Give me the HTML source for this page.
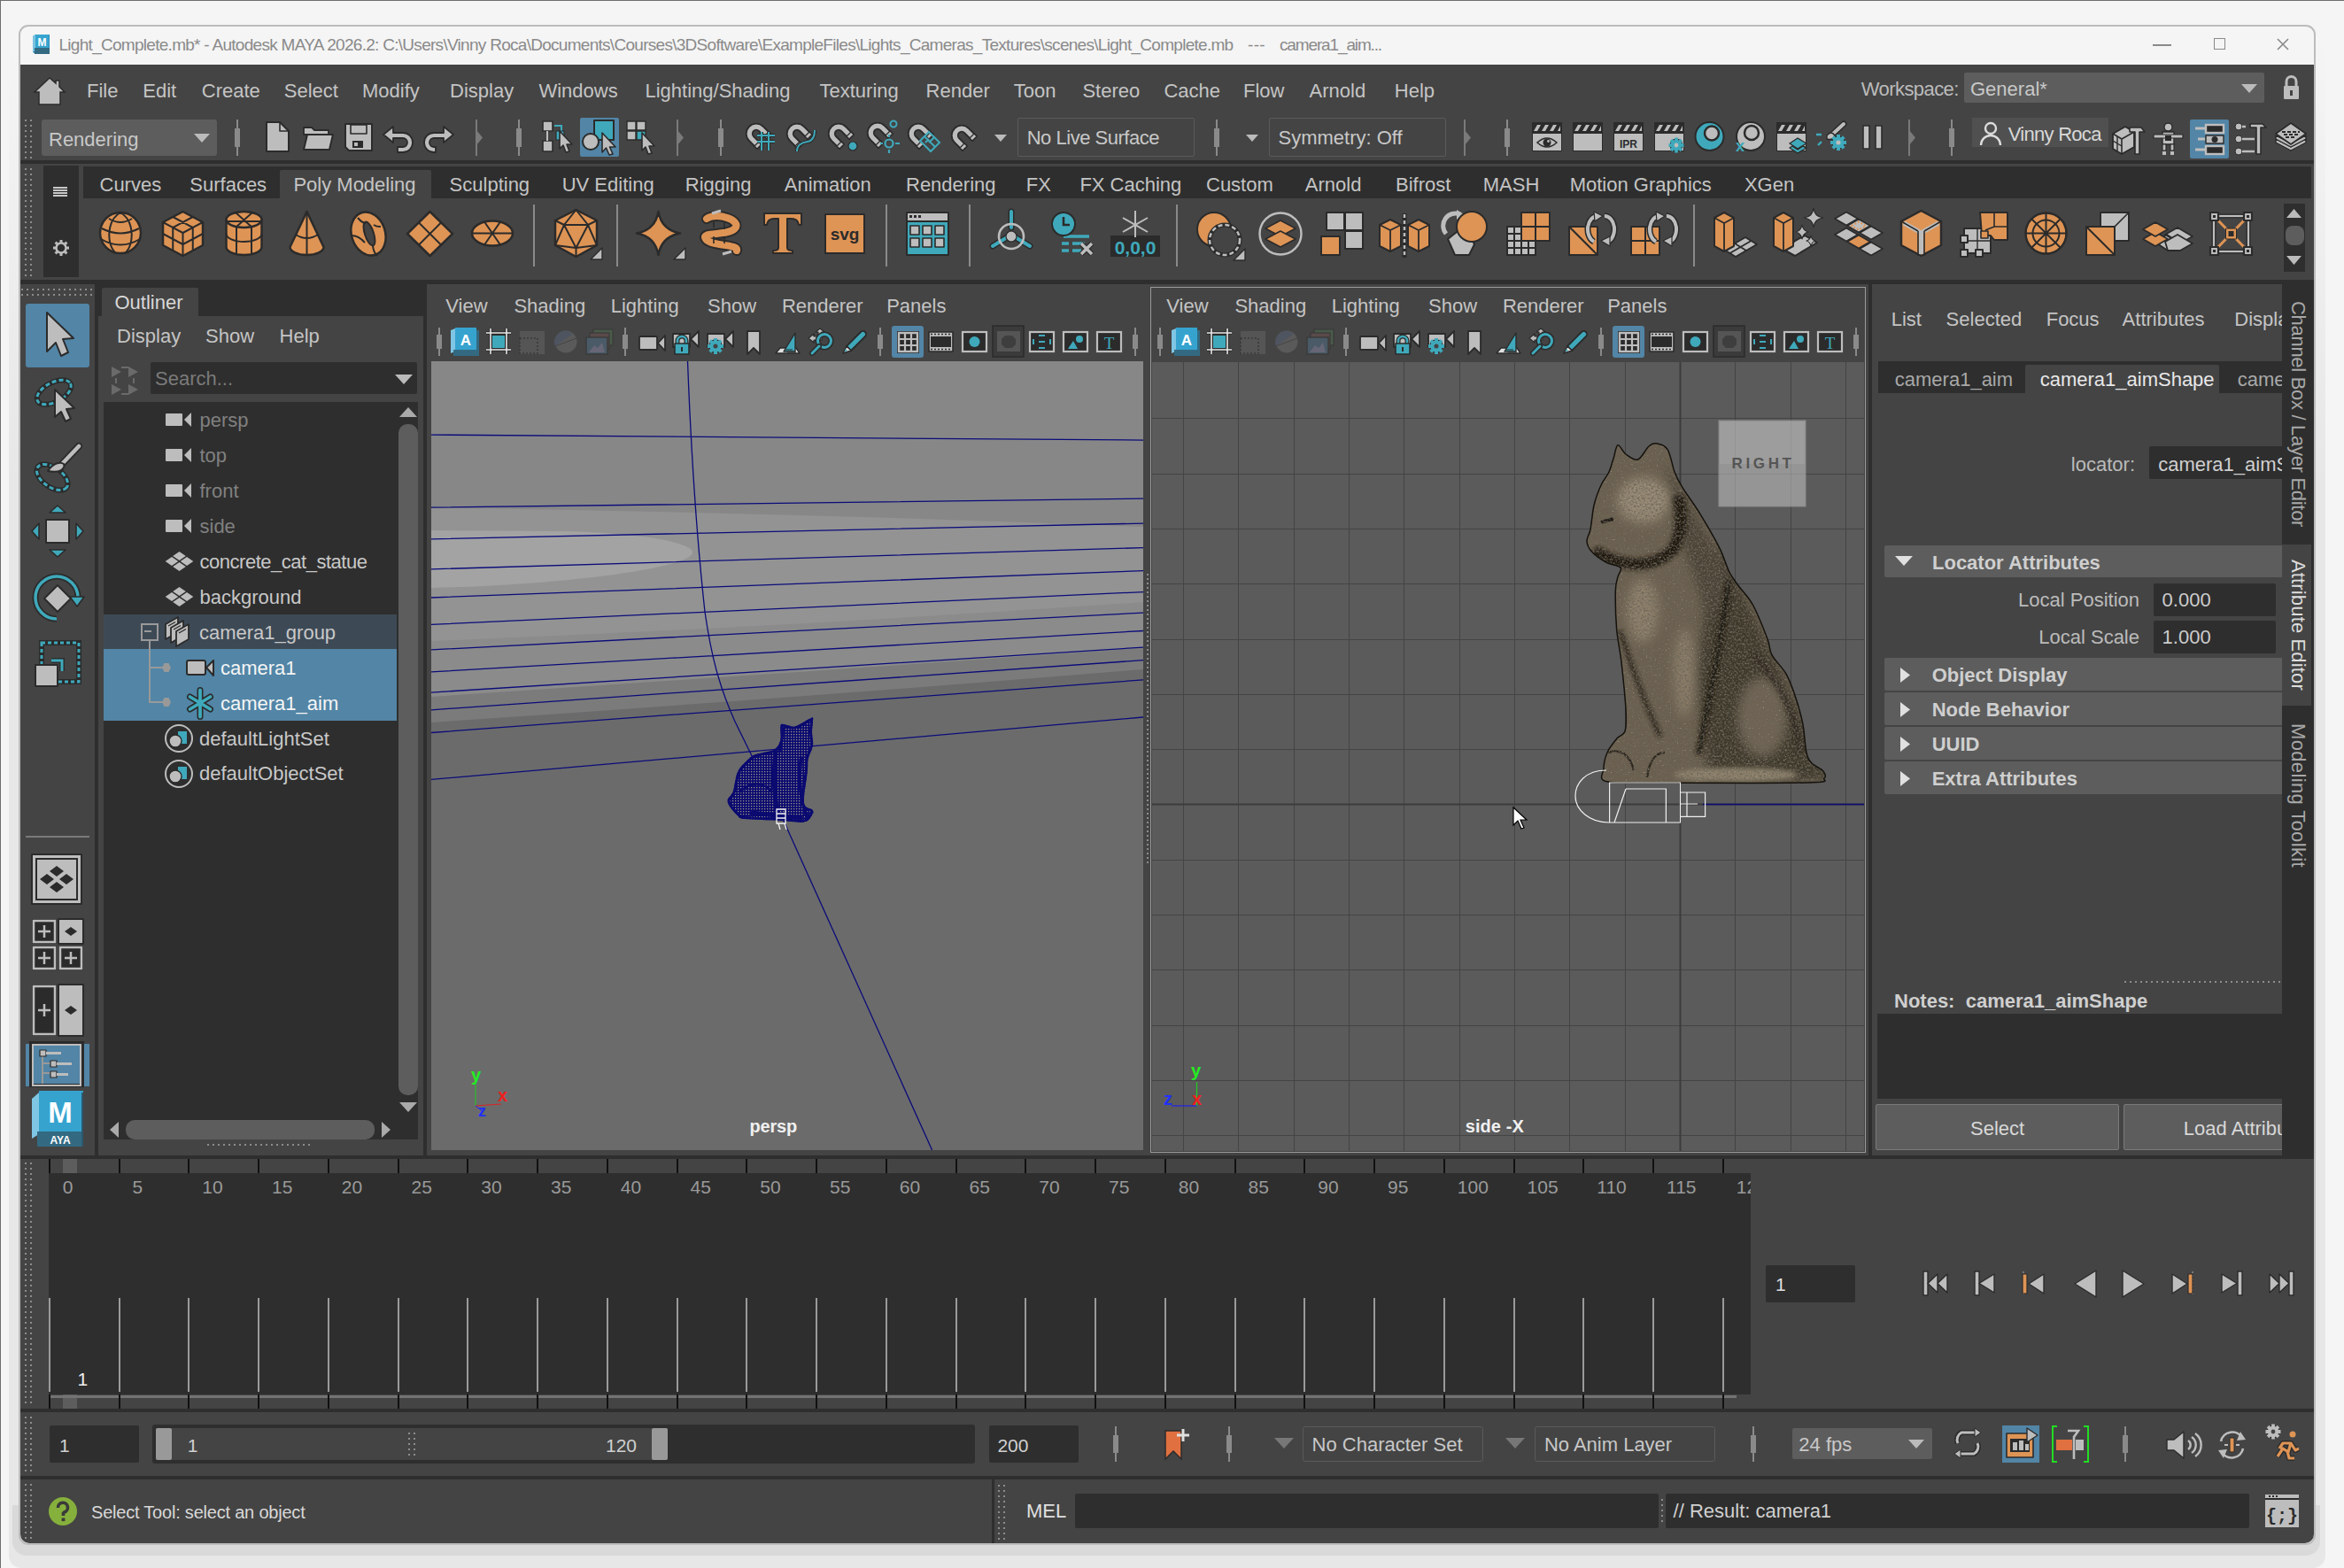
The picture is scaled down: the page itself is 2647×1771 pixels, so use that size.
<!DOCTYPE html><html><head><meta charset="utf-8"><style>
html,body{margin:0;padding:0;}
body{width:2647px;height:1771px;overflow:hidden;position:relative;background:#f5f5f5;font-family:"Liberation Sans",sans-serif;}
.r{position:absolute;}
.t{position:absolute;white-space:pre;}
svg.r{overflow:visible;}
</style></head><body>
<div class="r" style="left:10px;top:40px;width:2616px;height:1731px;background:#e7e7e7;border-radius:14px;background:linear-gradient(to bottom,#f5f5f5 0px,#e7e7e7 500px);"></div>
<div class="r" style="left:14px;top:1700px;width:2606px;height:57px;background:#d9d9d9;border-radius:0 0 16px 16px;"></div>
<div class="r" style="left:21px;top:28px;width:2590px;height:1713px;border:2px solid #bcbcbc;border-radius:11px;background:#f5f5f5;"></div>
<div class="r" style="left:23px;top:73px;width:2590px;height:1670px;background:#444444;border-radius:0 0 10px 10px;"></div>
<div class="r" style="left:0px;top:0px;width:2647px;height:1px;background:#6e6e6e;"></div>
<div class="r" style="left:0px;top:0px;width:1px;height:1771px;background:#6e6e6e;"></div>
<svg class="r" style="left:35px;top:38px;" width="22" height="24" viewBox="0 0 22 24"><path d="M2 3 L5 1 L21 1 L21 22 L3 22 L2 20 Z" fill="#2f90c0"/>
<path d="M2 3 L5 1 L5 20 L2 20 Z" fill="#78c4e0"/><rect x="5" y="1" width="15" height="16" fill="#38a5cf"/>
<rect x="4" y="16" width="17" height="7" fill="#336a82"/>
<text x="12.5" y="14" font-size="12" font-weight="bold" fill="#fff" text-anchor="middle" font-family="Liberation Sans">M</text></svg>
<div class="t" style="left:66.50px;top:40.91px;font-size:19px;line-height:19px;color:#8a8a8a;letter-spacing:-0.714px;">Light_Complete.mb* - Autodesk MAYA 2026.2: C:\Users\Vinny Roca\Documents\Courses\3DSoftware\ExampleFiles\Lights_Cameras_Textures\scenes\Light_Complete.mb</div>
<div class="t" style="left:1409.00px;top:40.91px;font-size:19px;line-height:19px;color:#8a8a8a;letter-spacing:0.339px;">---</div>
<div class="t" style="left:1445.00px;top:40.91px;font-size:19px;line-height:19px;color:#8a8a8a;letter-spacing:-1.139px;">camera1_aim...</div>
<div class="r" style="left:2431px;top:50px;width:21px;height:2px;background:#8a8a8a;"></div>
<div class="r" style="left:2500px;top:43px;width:11px;height:11px;border:1.5px solid #8a8a8a;"></div>
<svg class="r" style="left:2571px;top:43px;" width="14" height="14" viewBox="0 0 14 14"><path d="M1 1 L13 13 M13 1 L1 13" stroke="#8a8a8a" stroke-width="1.6"/></svg>
<svg class="r" style="left:38px;top:87px;" width="36" height="32" viewBox="0 0 36 32"><path d="M18 1 L1 17 L6 17 L6 31 L30 31 L30 17 L35 17 L29 11 L29 4 L25 4 L25 7 Z" fill="#bdbdbd" stroke="#2b2b2b" stroke-width="1.5"/></svg>
<div class="t" style="left:98.00px;top:92.37px;font-size:22px;line-height:22px;color:#c4c4c4;">File</div>
<div class="t" style="left:161.30px;top:92.37px;font-size:22px;line-height:22px;color:#c4c4c4;">Edit</div>
<div class="t" style="left:227.80px;top:92.37px;font-size:22px;line-height:22px;color:#c4c4c4;">Create</div>
<div class="t" style="left:320.80px;top:92.37px;font-size:22px;line-height:22px;color:#c4c4c4;">Select</div>
<div class="t" style="left:409.00px;top:92.37px;font-size:22px;line-height:22px;color:#c4c4c4;">Modify</div>
<div class="t" style="left:508.00px;top:92.37px;font-size:22px;line-height:22px;color:#c4c4c4;">Display</div>
<div class="t" style="left:608.40px;top:92.37px;font-size:22px;line-height:22px;color:#c4c4c4;">Windows</div>
<div class="t" style="left:728.50px;top:92.37px;font-size:22px;line-height:22px;color:#c4c4c4;">Lighting/Shading</div>
<div class="t" style="left:925.50px;top:92.37px;font-size:22px;line-height:22px;color:#c4c4c4;">Texturing</div>
<div class="t" style="left:1045.60px;top:92.37px;font-size:22px;line-height:22px;color:#c4c4c4;">Render</div>
<div class="t" style="left:1144.80px;top:92.37px;font-size:22px;line-height:22px;color:#c4c4c4;">Toon</div>
<div class="t" style="left:1222.40px;top:92.37px;font-size:22px;line-height:22px;color:#c4c4c4;">Stereo</div>
<div class="t" style="left:1314.40px;top:92.37px;font-size:22px;line-height:22px;color:#c4c4c4;">Cache</div>
<div class="t" style="left:1404.00px;top:92.37px;font-size:22px;line-height:22px;color:#c4c4c4;">Flow</div>
<div class="t" style="left:1478.60px;top:92.37px;font-size:22px;line-height:22px;color:#c4c4c4;">Arnold</div>
<div class="t" style="left:1574.80px;top:92.37px;font-size:22px;line-height:22px;color:#c4c4c4;">Help</div>
<div class="t" style="left:2101.80px;top:89.87px;font-size:22px;line-height:22px;color:#bbbbbb;letter-spacing:-0.575px;">Workspace:</div>
<div class="r" style="left:2218px;top:82px;width:339px;height:34px;background:#5d5d5d;border-radius:2px;"></div>
<div class="t" style="left:2225.00px;top:89.87px;font-size:22px;line-height:22px;color:#c8c8c8;">General*</div>
<svg class="r" style="left:2531px;top:95px;" width="18" height="10" viewBox="0 0 18 10"><path d="M0 0 L18 0 L9.0 10 Z" fill="#bbbbbb"/></svg>
<svg class="r" style="left:2577px;top:85px;" width="21" height="28" viewBox="0 0 21 28"><path d="M5 12 L5 7 A5.5 5.5 0 0 1 16 7 L16 12" fill="none" stroke="#bdbdbd" stroke-width="3"/><rect x="2" y="12" width="17" height="15" rx="1" fill="#bdbdbd"/><rect x="9" y="17" width="3" height="6" fill="#444"/></svg>
<!--STATUS-->
<svg class="r" style="left:28px;top:135px;" width="8" height="43" viewBox="0 0 8 43"><g fill="#8c8c8c"><rect x="0" y="0" width="2" height="2"/><rect x="6" y="0" width="2" height="2"/><rect x="0" y="6" width="2" height="2"/><rect x="6" y="6" width="2" height="2"/><rect x="0" y="12" width="2" height="2"/><rect x="6" y="12" width="2" height="2"/><rect x="0" y="18" width="2" height="2"/><rect x="6" y="18" width="2" height="2"/><rect x="0" y="24" width="2" height="2"/><rect x="6" y="24" width="2" height="2"/><rect x="0" y="30" width="2" height="2"/><rect x="6" y="30" width="2" height="2"/><rect x="0" y="36" width="2" height="2"/><rect x="6" y="36" width="2" height="2"/><rect x="0" y="42" width="2" height="2"/><rect x="6" y="42" width="2" height="2"/></g></svg>
<div class="r" style="left:47px;top:135px;width:198px;height:41px;background:#5d5d5d;border-radius:3px;"></div>
<div class="t" style="left:55.00px;top:146.87px;font-size:22px;line-height:22px;color:#c8c8c8;">Rendering</div>
<svg class="r" style="left:219px;top:151px;" width="18" height="10" viewBox="0 0 18 10"><path d="M0 0 L18 0 L9.0 10 Z" fill="#bbbbbb"/></svg>
<div class="r" style="left:267px;top:135px;width:2px;height:41px;background:#8a8a8a;"></div>
<div class="r" style="left:265px;top:145.25px;width:6px;height:20.5px;background:#8a8a8a;"></div>
<div class="r" style="left:655px;top:133px;width:44px;height:44px;background:#5285a6;border-radius:2px;"></div>
<div class="r" style="left:2473px;top:135px;width:44px;height:44px;background:#5285a6;border-radius:2px;"></div>
<svg class="r" style="left:300px;top:137px;" width="28" height="36" viewBox="0 0 28 36"><path d="M1 1 H16 L26 11 V34 H1 Z" fill="#bdbdbd" stroke="#2b2b2b" stroke-width="2" stroke-linejoin="round"/><path d="M16 1 V11 H26" fill="none" stroke="#2b2b2b" stroke-width="1.6" stroke-linejoin="round"/></svg>
<svg class="r" style="left:341px;top:140px;" width="37" height="31" viewBox="0 0 37 31"><path d="M2 4 H11 L14 7 H30 V12 H2 Z" fill="#bdbdbd" stroke="#2b2b2b" stroke-width="1.8" stroke-linejoin="round"/><path d="M6 12 H35 L31 29 H2 Z" fill="#bdbdbd" stroke="#2b2b2b" stroke-width="2" stroke-linejoin="round"/></svg>
<svg class="r" style="left:389px;top:139px;" width="33" height="33" viewBox="0 0 33 33"><path d="M1 1 H31 V31 H5 L1 27 Z" fill="#bdbdbd" stroke="#2b2b2b" stroke-width="2" stroke-linejoin="round"/><rect x="7" y="2" width="18" height="10" fill="#bdbdbd" stroke="#2b2b2b" stroke-width="1.6" stroke-linejoin="round"/><rect x="9" y="20" width="12" height="8" fill="#2b2b2b"/><rect x="11" y="22" width="4" height="4" fill="#bdbdbd"/></svg>
<svg class="r" style="left:431px;top:141px;" width="37" height="33" viewBox="0 0 37 33"><path d="M13 2 L2 11 L13 20 L13 15 H24 A5 5 0 0 1 24 25 H18 V31 H24 A11 11 0 0 0 24 9 H13 Z" fill="#bdbdbd" stroke="#2b2b2b" stroke-width="1.8" stroke-linejoin="round"/></svg>
<svg class="r" style="left:478px;top:141px;" width="37" height="33" viewBox="0 0 37 33"><path d="M23 2 L34 11 L23 20 L23 15 H12 A5 5 0 0 0 12 25 H14 V31 H12 A11 11 0 0 1 12 9 H23 Z" fill="#bdbdbd" stroke="#2b2b2b" stroke-width="1.8" stroke-linejoin="round"/></svg>
<svg class="r" style="left:612px;top:136px;" width="36" height="38" viewBox="0 0 36 38"><rect x="1" y="1" width="11" height="11" fill="#bdbdbd" stroke="#2b2b2b" stroke-width="1.6" stroke-linejoin="round"/><rect x="1" y="23" width="11" height="12" fill="#bdbdbd" stroke="#2b2b2b" stroke-width="1.6" stroke-linejoin="round"/><path d="M6 12 V23" stroke="#bdbdbd" stroke-width="2"/><path d="M14 6 H22 V12" fill="none" stroke="#3fa9bb" stroke-width="2"/><rect x="16" y="12" width="9" height="10" fill="#3fa9bb" stroke="#2b2b2b" stroke-width="1.2" stroke-linejoin="round"/><path d="M20 12 L20 32 L24 28 L27 36 L31 35 L28 27 L34 27 Z" fill="#bdbdbd" stroke="#2b2b2b" stroke-width="1.6" stroke-linejoin="round"/></svg>
<svg class="r" style="left:656px;top:134px;" width="42" height="43" viewBox="0 0 42 43"><rect x="15" y="2" width="22" height="22" fill="#3fa9bb" stroke="#2b2b2b" stroke-width="2" stroke-linejoin="round"/><circle cx="11" cy="26" r="9" fill="#bdbdbd" stroke="#2b2b2b" stroke-width="2" stroke-linejoin="round"/><path d="M24 16 L24 38 L28.5 33 L32 41 L36 40 L32.5 32 L39 32 Z" fill="#bdbdbd" stroke="#2b2b2b" stroke-width="1.6" stroke-linejoin="round"/></svg>
<svg class="r" style="left:707px;top:136px;" width="34" height="38" viewBox="0 0 34 38"><rect x="1" y="1" width="10" height="10" fill="#bdbdbd" stroke="#2b2b2b" stroke-width="1.4" stroke-linejoin="round"/><rect x="12" y="1" width="10" height="10" fill="#bdbdbd" stroke="#2b2b2b" stroke-width="1.4" stroke-linejoin="round"/><rect x="1" y="12" width="10" height="10" fill="#bdbdbd" stroke="#2b2b2b" stroke-width="1.4" stroke-linejoin="round"/><rect x="12" y="12" width="10" height="10" fill="#3fa9bb" stroke="#2b2b2b" stroke-width="1.4" stroke-linejoin="round"/><path d="M18 14 L18 34 L22 30 L25 38 L29 37 L26 29 L32 29 Z" fill="#bdbdbd" stroke="#2b2b2b" stroke-width="1.6" stroke-linejoin="round"/></svg>
<svg class="r" style="left:842px;top:137px;" width="36" height="37" viewBox="0 0 36 37"><path d="M4 22 A11 11 0 0 1 20 6 L29 15 L24 20 L15 11 A4 4 0 0 0 9 17 L18 26 L13 31 Z" fill="#bdbdbd" stroke="#2b2b2b" stroke-width="1.8" stroke-linejoin="round"/><path d="M24 20 L29 15 L26 12 L21 17 Z M13 31 L18 26 L15 23 L10 28 Z" fill="#bdbdbd" stroke="#2b2b2b" stroke-width="1.2" stroke-linejoin="round"/><path d="M13 16 H33 M13 23 H33 M18 12 V33 M26 12 V33" stroke="#2b2b2b" stroke-width="4"/><path d="M13 16 H33 M13 23 H33 M18 12 V33 M26 12 V33" stroke="#3fa9bb" stroke-width="2"/></svg>
<svg class="r" style="left:888px;top:137px;" width="36" height="37" viewBox="0 0 36 37"><path d="M4 22 A11 11 0 0 1 20 6 L29 15 L24 20 L15 11 A4 4 0 0 0 9 17 L18 26 L13 31 Z" fill="#bdbdbd" stroke="#2b2b2b" stroke-width="1.8" stroke-linejoin="round"/><path d="M24 20 L29 15 L26 12 L21 17 Z M13 31 L18 26 L15 23 L10 28 Z" fill="#bdbdbd" stroke="#2b2b2b" stroke-width="1.2" stroke-linejoin="round"/><path d="M12 34 C12 26 18 24 24 23 C30 22 32 16 32 10" fill="none" stroke="#2b2b2b" stroke-width="4"/><path d="M12 34 C12 26 18 24 24 23 C30 22 32 16 32 10" fill="none" stroke="#3fa9bb" stroke-width="2"/></svg>
<svg class="r" style="left:935px;top:137px;" width="36" height="37" viewBox="0 0 36 37"><path d="M4 22 A11 11 0 0 1 20 6 L29 15 L24 20 L15 11 A4 4 0 0 0 9 17 L18 26 L13 31 Z" fill="#bdbdbd" stroke="#2b2b2b" stroke-width="1.8" stroke-linejoin="round"/><path d="M24 20 L29 15 L26 12 L21 17 Z M13 31 L18 26 L15 23 L10 28 Z" fill="#bdbdbd" stroke="#2b2b2b" stroke-width="1.2" stroke-linejoin="round"/><circle cx="28" cy="28" r="5" fill="#3fa9bb" stroke="#2b2b2b" stroke-width="1.2" stroke-linejoin="round"/></svg>
<svg class="r" style="left:979px;top:136px;" width="38" height="38" viewBox="0 0 38 38"><path d="M4 22 A11 11 0 0 1 20 6 L29 15 L24 20 L15 11 A4 4 0 0 0 9 17 L18 26 L13 31 Z" fill="#bdbdbd" stroke="#2b2b2b" stroke-width="1.8" stroke-linejoin="round"/><path d="M24 20 L29 15 L26 12 L21 17 Z M13 31 L18 26 L15 23 L10 28 Z" fill="#bdbdbd" stroke="#2b2b2b" stroke-width="1.2" stroke-linejoin="round"/><circle cx="30" cy="4" r="3.5" fill="none" stroke="#3fa9bb" stroke-width="2"/><circle cx="25" cy="26" r="4.5" fill="none" stroke="#3fa9bb" stroke-width="2.2"/><path d="M25 16 V19 M25 33 V37 M15 26 H18 M32 26 H37" stroke="#3fa9bb" stroke-width="2.2"/></svg>
<svg class="r" style="left:1025px;top:137px;" width="38" height="37" viewBox="0 0 38 37"><path d="M4 22 A11 11 0 0 1 20 6 L29 15 L24 20 L15 11 A4 4 0 0 0 9 17 L18 26 L13 31 Z" fill="#bdbdbd" stroke="#2b2b2b" stroke-width="1.8" stroke-linejoin="round"/><path d="M24 20 L29 15 L26 12 L21 17 Z M13 31 L18 26 L15 23 L10 28 Z" fill="#bdbdbd" stroke="#2b2b2b" stroke-width="1.2" stroke-linejoin="round"/><path d="M14 22 L24 12 L36 24 L26 34 Z" fill="none" stroke="#3fa9bb" stroke-width="2"/><path d="M19 17 L31 29 M24 24 L30 18 M20 24 L24 20" stroke="#3fa9bb" stroke-width="2"/></svg>
<svg class="r" style="left:1074px;top:139px;" width="36" height="37" viewBox="0 0 36 37"><path d="M4 22 A11 11 0 0 1 20 6 L29 15 L24 20 L15 11 A4 4 0 0 0 9 17 L18 26 L13 31 Z" fill="#bdbdbd" stroke="#2b2b2b" stroke-width="1.8" stroke-linejoin="round"/><path d="M24 20 L29 15 L26 12 L21 17 Z M13 31 L18 26 L15 23 L10 28 Z" fill="#bdbdbd" stroke="#2b2b2b" stroke-width="1.2" stroke-linejoin="round"/></svg>
<svg class="r" style="left:1729px;top:137px;" width="36" height="35" viewBox="0 0 36 35"><rect x="1" y="1" width="34" height="33" fill="#2b2b2b"/><rect x="2" y="14" width="32" height="19" fill="#bdbdbd"/><path d="M3 11 L7 4 H11 L7 11 Z M12 11 L16 4 H20 L16 11 Z M21 11 L25 4 H29 L25 11 Z M30 11 L33 5 V11 Z" fill="#bdbdbd"/><path d="M7 24 Q18 14 29 24 Q18 34 7 24 Z" fill="none" stroke="#2b2b2b" stroke-width="1.6"/><circle cx="18" cy="24" r="4.5" fill="#2b2b2b"/><circle cx="19.5" cy="22.5" r="1.4" fill="#bdbdbd"/></svg>
<svg class="r" style="left:1775px;top:137px;" width="36" height="35" viewBox="0 0 36 35"><rect x="1" y="1" width="34" height="33" fill="#2b2b2b"/><rect x="2" y="14" width="32" height="19" fill="#bdbdbd"/><path d="M3 11 L7 4 H11 L7 11 Z M12 11 L16 4 H20 L16 11 Z M21 11 L25 4 H29 L25 11 Z M30 11 L33 5 V11 Z" fill="#bdbdbd"/></svg>
<svg class="r" style="left:1821px;top:137px;" width="36" height="35" viewBox="0 0 36 35"><rect x="1" y="1" width="34" height="33" fill="#2b2b2b"/><rect x="2" y="14" width="32" height="19" fill="#bdbdbd"/><path d="M3 11 L7 4 H11 L7 11 Z M12 11 L16 4 H20 L16 11 Z M21 11 L25 4 H29 L25 11 Z M30 11 L33 5 V11 Z" fill="#bdbdbd"/><text x="18" y="30" font-family="Liberation Sans" font-weight="bold" font-size="12" fill="#2b2b2b" text-anchor="middle">IPR</text></svg>
<svg class="r" style="left:1867px;top:137px;" width="37" height="36" viewBox="0 0 37 36"><rect x="1" y="1" width="34" height="33" fill="#2b2b2b"/><rect x="2" y="14" width="32" height="19" fill="#bdbdbd"/><path d="M3 11 L7 4 H11 L7 11 Z M12 11 L16 4 H20 L16 11 Z M21 11 L25 4 H29 L25 11 Z M30 11 L33 5 V11 Z" fill="#bdbdbd"/><circle cx="26" cy="27" r="6.800000000000001" fill="#3fa9bb" stroke="#2b2b2b" stroke-width="1.2" stroke-linejoin="round"/><path d="M17.5 27 H34.5 M26 18.5 V35.5 M20.05 21.05 L31.95 32.95 M20.05 32.95 L31.95 21.05" stroke="#3fa9bb" stroke-width="3.8"/><circle cx="26" cy="27" r="4.675000000000001" fill="#3fa9bb"/><circle cx="26" cy="27" r="2.3800000000000003" fill="#bdbdbd"/></svg>
<svg class="r" style="left:1913px;top:137px;" width="36" height="35" viewBox="0 0 36 35"><circle cx="17.5" cy="17" r="16" fill="#3fa9bb" stroke="#2b2b2b" stroke-width="2" stroke-linejoin="round"/><circle cx="20" cy="13.5" r="8" fill="#bdbdbd" stroke="#2b2b2b" stroke-width="2.5" stroke-linejoin="round"/></svg>
<svg class="r" style="left:1957px;top:137px;" width="38" height="36" viewBox="0 0 38 36"><circle cx="20" cy="17" r="16" fill="#bdbdbd" stroke="#2b2b2b" stroke-width="2" stroke-linejoin="round"/><circle cx="21" cy="13" r="8" fill="#bdbdbd" stroke="#2b2b2b" stroke-width="2.5" stroke-linejoin="round"/><text x="8" y="34" font-family="Liberation Sans" font-weight="bold" font-size="18" fill="#3fa9bb" text-anchor="middle">x</text></svg>
<svg class="r" style="left:2005px;top:137px;" width="37" height="37" viewBox="0 0 37 37"><rect x="1" y="1" width="34" height="33" fill="#2b2b2b"/><rect x="2" y="14" width="32" height="19" fill="#bdbdbd"/><path d="M3 11 L7 4 H11 L7 11 Z M12 11 L16 4 H20 L16 11 Z M21 11 L25 4 H29 L25 11 Z M30 11 L33 5 V11 Z" fill="#bdbdbd"/><path d="M16 25 L25 19 L35 25 L25 31 Z" fill="#3fa9bb" stroke="#2b2b2b" stroke-width="1.4" stroke-linejoin="round"/><path d="M16 30 L19 28 L25 32 L31 28 L35 30 L25 36 Z" fill="#3fa9bb" stroke="#2b2b2b" stroke-width="1.4" stroke-linejoin="round"/></svg>
<svg class="r" style="left:2050px;top:137px;" width="37" height="36" viewBox="0 0 37 36"><path d="M20 14 L32 3" stroke="#2b2b2b" stroke-width="7" stroke-linecap="round"/><path d="M20 14 L32 3" stroke="#bdbdbd" stroke-width="4" stroke-linecap="round"/><path d="M13 16 Q18 10 22 16 Q20 22 13 20 Z" fill="#bdbdbd" stroke="#2b2b2b" stroke-width="1.4" stroke-linejoin="round"/><path d="M1 15 H7 M3 27 L7 23" stroke="#3fa9bb" stroke-width="2.4"/><circle cx="26" cy="24" r="7.2" fill="#3fa9bb" stroke="#2b2b2b" stroke-width="1.2" stroke-linejoin="round"/><path d="M17 24 H35 M26 15 V33 M19.7 17.7 L32.3 30.3 M19.7 30.3 L32.3 17.7" stroke="#3fa9bb" stroke-width="4.0"/><circle cx="26" cy="24" r="4.95" fill="#3fa9bb"/><circle cx="26" cy="24" r="2.5200000000000005" fill="#bdbdbd"/></svg>
<svg class="r" style="left:2103px;top:141px;" width="24" height="28" viewBox="0 0 24 28"><rect x="1" y="1" width="7" height="26" fill="#bdbdbd" stroke="#2b2b2b" stroke-width="1.6" stroke-linejoin="round"/><rect x="15" y="1" width="7" height="26" fill="#bdbdbd" stroke="#2b2b2b" stroke-width="1.6" stroke-linejoin="round"/></svg>
<svg class="r" style="left:2235px;top:137px;" width="25" height="26" viewBox="0 0 25 26"><circle cx="12.5" cy="7" r="5.5" fill="none" stroke="#e0e0e0" stroke-width="2.2"/><path d="M1.5 25 A11 11 0 0 1 23.5 25" fill="none" stroke="#e0e0e0" stroke-width="2.2"/></svg>
<svg class="r" style="left:2384px;top:138px;" width="39" height="38" viewBox="0 0 39 38"><path d="M2 13 L16 5 L26 11 L26 28 L12 36 L2 30 Z" fill="#bdbdbd" stroke="#2b2b2b" stroke-width="1.8" stroke-linejoin="round"/><path d="M2 13 L12 19 L26 11 M12 19 V36" fill="none" stroke="#2b2b2b" stroke-width="1.6" stroke-linejoin="round"/><path d="M2 21 L12 27 M7 16 V33" stroke="#2b2b2b" stroke-width="1.4"/><path d="M21 6 H34 L38 11 H32 V36 H27 V11 H21 Z" fill="#bdbdbd" stroke="#2b2b2b" stroke-width="1.6" stroke-linejoin="round"/></svg>
<svg class="r" style="left:2431px;top:138px;" width="36" height="38" viewBox="0 0 36 38"><circle cx="17.5" cy="5.5" r="4.5" fill="#bdbdbd" stroke="#2b2b2b" stroke-width="1.4" stroke-linejoin="round"/><rect x="11" y="11" width="13" height="14" fill="#bdbdbd" stroke="#2b2b2b" stroke-width="1.4" stroke-linejoin="round"/><rect x="1" y="14" width="33" height="4" fill="#bdbdbd" stroke="#2b2b2b" stroke-width="1.2" stroke-linejoin="round"/><rect x="14" y="15" width="7" height="6" fill="#2b2b2b"/><rect x="11" y="25" width="4" height="7" fill="#bdbdbd" stroke="#2b2b2b" stroke-width="1.2" stroke-linejoin="round"/><rect x="20" y="25" width="4" height="7" fill="#bdbdbd" stroke="#2b2b2b" stroke-width="1.2" stroke-linejoin="round"/><rect x="11" y="33" width="4" height="4" fill="#bdbdbd"/><rect x="20" y="33" width="4" height="4" fill="#bdbdbd"/></svg>
<svg class="r" style="left:2475px;top:138px;" width="40" height="39" viewBox="0 0 40 39"><path d="M4 7 H15 M7 19 H15 M4 31 H15" stroke="#bdbdbd" stroke-width="3"/><rect x="16" y="3" width="20" height="9" fill="#2b2b2b" stroke="#bdbdbd" stroke-width="2.4"/><rect x="16" y="15" width="20" height="9" fill="#bdbdbd" stroke="#2b2b2b" stroke-width="1.4" stroke-linejoin="round"/><circle cx="26" cy="19.5" r="3.5" fill="#2b2b2b"/><rect x="16" y="27" width="20" height="9" fill="#2b2b2b" stroke="#bdbdbd" stroke-width="2.4"/></svg>
<svg class="r" style="left:2523px;top:138px;" width="37" height="38" viewBox="0 0 37 38"><circle cx="5" cy="5" r="4" fill="#bdbdbd" stroke="#2b2b2b" stroke-width="1" stroke-linejoin="round"/><circle cx="5" cy="19" r="4" fill="#bdbdbd" stroke="#2b2b2b" stroke-width="1" stroke-linejoin="round"/><circle cx="5" cy="33" r="4" fill="#bdbdbd" stroke="#2b2b2b" stroke-width="1" stroke-linejoin="round"/><path d="M9 5 H13 M9 19 H23 M9 33 H23" stroke="#bdbdbd" stroke-width="2.4"/><path d="M18 2 H32 L36 6 H30 V36 H25 V6 H18 Z" fill="#bdbdbd" stroke="#2b2b2b" stroke-width="1.6" stroke-linejoin="round"/></svg>
<svg class="r" style="left:2569px;top:138px;" width="36" height="38" viewBox="0 0 36 38"><path d="M18 28 L1 19 V23 L18 32 L35 23 V19 Z" fill="#bdbdbd" stroke="#2b2b2b" stroke-width="1.4" stroke-linejoin="round"/><path d="M18 24 L1 15 V19 L18 28 L35 19 V15 Z" fill="#bdbdbd" stroke="#2b2b2b" stroke-width="1.4" stroke-linejoin="round"/><path d="M18 1 L35 13 L18 25 L1 13 Z" fill="#bdbdbd" stroke="#2b2b2b" stroke-width="1.6" stroke-linejoin="round"/><path d="M8 11 H28 M10 14 H26 M12 17 H24" stroke="#2b2b2b" stroke-width="1.8" stroke-dasharray="4 2"/></svg>
<svg class="r" style="left:537px;top:135px;" width="10" height="41" viewBox="0 0 10 41"><rect x="0" y="0" width="2" height="41" fill="#7a7a7a"/><path d="M1 12 L8 20.5 L1 29 Z" fill="#7a7a7a"/></svg>
<div class="r" style="left:585px;top:135px;width:2px;height:41px;background:#8a8a8a;"></div>
<div class="r" style="left:583px;top:145.25px;width:6px;height:20.5px;background:#8a8a8a;"></div>
<svg class="r" style="left:764px;top:135px;" width="10" height="41" viewBox="0 0 10 41"><rect x="0" y="0" width="2" height="41" fill="#7a7a7a"/><path d="M1 12 L8 20.5 L1 29 Z" fill="#7a7a7a"/></svg>
<div class="r" style="left:813px;top:135px;width:2px;height:41px;background:#8a8a8a;"></div>
<div class="r" style="left:811px;top:145.25px;width:6px;height:20.5px;background:#8a8a8a;"></div>
<svg class="r" style="left:1123px;top:152px;" width="14" height="8" viewBox="0 0 14 8"><path d="M0 0 L14 0 L7.0 8 Z" fill="#bbbbbb"/></svg>
<div class="r" style="left:1149px;top:133px;width:198px;height:42px;border:1px solid #5a5a5a;border-radius:2px;"></div>
<div class="t" style="left:1159.70px;top:145.37px;font-size:22px;line-height:22px;color:#c8c8c8;letter-spacing:-0.482px;">No Live Surface</div>
<div class="r" style="left:1373px;top:135px;width:2px;height:41px;background:#8a8a8a;"></div>
<div class="r" style="left:1371px;top:145.25px;width:6px;height:20.5px;background:#8a8a8a;"></div>
<svg class="r" style="left:1407px;top:152px;" width="14" height="8" viewBox="0 0 14 8"><path d="M0 0 L14 0 L7.0 8 Z" fill="#bbbbbb"/></svg>
<div class="r" style="left:1433px;top:133px;width:198px;height:42px;border:1px solid #5a5a5a;border-radius:2px;"></div>
<div class="t" style="left:1443.50px;top:145.37px;font-size:22px;line-height:22px;color:#c8c8c8;">Symmetry: Off</div>
<svg class="r" style="left:1653px;top:135px;" width="10" height="41" viewBox="0 0 10 41"><rect x="0" y="0" width="2" height="41" fill="#7a7a7a"/><path d="M1 12 L8 20.5 L1 29 Z" fill="#7a7a7a"/></svg>
<div class="r" style="left:1701px;top:135px;width:2px;height:41px;background:#8a8a8a;"></div>
<div class="r" style="left:1699px;top:145.25px;width:6px;height:20.5px;background:#8a8a8a;"></div>
<svg class="r" style="left:2155px;top:135px;" width="10" height="41" viewBox="0 0 10 41"><rect x="0" y="0" width="2" height="41" fill="#7a7a7a"/><path d="M1 12 L8 20.5 L1 29 Z" fill="#7a7a7a"/></svg>
<div class="r" style="left:2203px;top:135px;width:2px;height:41px;background:#8a8a8a;"></div>
<div class="r" style="left:2201px;top:145.25px;width:6px;height:20.5px;background:#8a8a8a;"></div>
<div class="r" style="left:2227px;top:133px;width:154px;height:33px;background:#505050;"></div>
<svg class="r" style="left:2235px;top:137px;" width="26" height="28" viewBox="0 0 26 28"><circle cx="13" cy="8" r="6" fill="none" stroke="#ddd" stroke-width="2.4"/><path d="M2 27 A11 11 0 0 1 24 27" fill="none" stroke="#ddd" stroke-width="2.4"/></svg>
<div class="t" style="left:2267.70px;top:141.37px;font-size:22px;line-height:22px;color:#d8d8d8;letter-spacing:-0.711px;">Vinny Roca</div>
<div class="r" style="left:23px;top:181px;width:2590px;height:4px;background:#2e2e2e;"></div>
<svg class="r" style="left:28px;top:190px;" width="8" height="122" viewBox="0 0 8 122"><g fill="#8c8c8c"><rect x="0" y="0" width="2" height="2"/><rect x="6" y="0" width="2" height="2"/><rect x="0" y="6" width="2" height="2"/><rect x="6" y="6" width="2" height="2"/><rect x="0" y="12" width="2" height="2"/><rect x="6" y="12" width="2" height="2"/><rect x="0" y="18" width="2" height="2"/><rect x="6" y="18" width="2" height="2"/><rect x="0" y="24" width="2" height="2"/><rect x="6" y="24" width="2" height="2"/><rect x="0" y="30" width="2" height="2"/><rect x="6" y="30" width="2" height="2"/><rect x="0" y="36" width="2" height="2"/><rect x="6" y="36" width="2" height="2"/><rect x="0" y="42" width="2" height="2"/><rect x="6" y="42" width="2" height="2"/><rect x="0" y="48" width="2" height="2"/><rect x="6" y="48" width="2" height="2"/><rect x="0" y="54" width="2" height="2"/><rect x="6" y="54" width="2" height="2"/><rect x="0" y="60" width="2" height="2"/><rect x="6" y="60" width="2" height="2"/><rect x="0" y="66" width="2" height="2"/><rect x="6" y="66" width="2" height="2"/><rect x="0" y="72" width="2" height="2"/><rect x="6" y="72" width="2" height="2"/><rect x="0" y="78" width="2" height="2"/><rect x="6" y="78" width="2" height="2"/><rect x="0" y="84" width="2" height="2"/><rect x="6" y="84" width="2" height="2"/><rect x="0" y="90" width="2" height="2"/><rect x="6" y="90" width="2" height="2"/><rect x="0" y="96" width="2" height="2"/><rect x="6" y="96" width="2" height="2"/><rect x="0" y="102" width="2" height="2"/><rect x="6" y="102" width="2" height="2"/><rect x="0" y="108" width="2" height="2"/><rect x="6" y="108" width="2" height="2"/><rect x="0" y="114" width="2" height="2"/><rect x="6" y="114" width="2" height="2"/><rect x="0" y="120" width="2" height="2"/><rect x="6" y="120" width="2" height="2"/></g></svg>
<div class="r" style="left:49px;top:187px;width:40px;height:126px;background:#2e2e2e;"></div>
<svg class="r" style="left:60px;top:211px;" width="16" height="11" viewBox="0 0 16 11"><g fill="#c8c8c8"><rect x="0" y="0" width="16" height="2"/><rect x="0" y="3" width="16" height="2"/><rect x="0" y="6" width="16" height="2"/><rect x="0" y="9" width="16" height="2"/></g></svg>
<svg class="r" style="left:60px;top:271px;" width="18" height="18" viewBox="0 0 18 18"><circle cx="9" cy="9" r="5.5" fill="none" stroke="#bdbdbd" stroke-width="2.5"/><g stroke="#bdbdbd" stroke-width="3"><path d="M9 0 V3 M9 15 V18 M0 9 H3 M15 9 H18 M2.6 2.6 L4.7 4.7 M13.3 13.3 L15.4 15.4 M2.6 15.4 L4.7 13.3 M13.3 4.7 L15.4 2.6"/></g></svg>
<div class="r" style="left:94px;top:188px;width:2516px;height:36px;background:#2e2e2e;"></div>
<div class="r" style="left:316px;top:192px;width:171px;height:32px;background:#444444;border-radius:2px 2px 0 0;"></div>
<div class="t" style="left:112.50px;top:197.87px;font-size:22px;line-height:22px;color:#c4c4c4;">Curves</div>
<div class="t" style="left:214.30px;top:197.87px;font-size:22px;line-height:22px;color:#c4c4c4;">Surfaces</div>
<div class="t" style="left:331.40px;top:197.87px;font-size:22px;line-height:22px;color:#c4c4c4;">Poly Modeling</div>
<div class="t" style="left:507.60px;top:197.87px;font-size:22px;line-height:22px;color:#c4c4c4;">Sculpting</div>
<div class="t" style="left:634.70px;top:197.87px;font-size:22px;line-height:22px;color:#c4c4c4;">UV Editing</div>
<div class="t" style="left:773.80px;top:197.87px;font-size:22px;line-height:22px;color:#c4c4c4;">Rigging</div>
<div class="t" style="left:885.80px;top:197.87px;font-size:22px;line-height:22px;color:#c4c4c4;">Animation</div>
<div class="t" style="left:1023.00px;top:197.87px;font-size:22px;line-height:22px;color:#c4c4c4;">Rendering</div>
<div class="t" style="left:1158.80px;top:197.87px;font-size:22px;line-height:22px;color:#c4c4c4;">FX</div>
<div class="t" style="left:1219.40px;top:197.87px;font-size:22px;line-height:22px;color:#c4c4c4;">FX Caching</div>
<div class="t" style="left:1362.00px;top:197.87px;font-size:22px;line-height:22px;color:#c4c4c4;">Custom</div>
<div class="t" style="left:1473.80px;top:197.87px;font-size:22px;line-height:22px;color:#c4c4c4;">Arnold</div>
<div class="t" style="left:1576.00px;top:197.87px;font-size:22px;line-height:22px;color:#c4c4c4;">Bifrost</div>
<div class="t" style="left:1674.80px;top:197.87px;font-size:22px;line-height:22px;color:#c4c4c4;">MASH</div>
<div class="t" style="left:1772.70px;top:197.87px;font-size:22px;line-height:22px;color:#c4c4c4;">Motion Graphics</div>
<div class="t" style="left:1969.90px;top:197.87px;font-size:22px;line-height:22px;color:#c4c4c4;">XGen</div>
<div class="r" style="left:602px;top:231px;width:2px;height:70px;background:#8a8a8a;"></div>
<div class="r" style="left:696px;top:231px;width:2px;height:70px;background:#8a8a8a;"></div>
<div class="r" style="left:1000px;top:231px;width:2px;height:70px;background:#8a8a8a;"></div>
<div class="r" style="left:1094px;top:231px;width:2px;height:70px;background:#8a8a8a;"></div>
<div class="r" style="left:1328px;top:231px;width:2px;height:70px;background:#8a8a8a;"></div>
<div class="r" style="left:1912px;top:231px;width:2px;height:70px;background:#8a8a8a;"></div>
<svg class="r" style="left:112px;top:239px;" width="48" height="49" viewBox="0 0 48 49"><circle cx="24" cy="24" r="23" fill="#de9455" stroke="#2b2b2b" stroke-width="2.5" stroke-linejoin="round"/><path d="M11 8 Q24 16 37 8 M3 19 Q24 30 45 19 M2 31 Q24 44 46 31 M24 1 C8 10 8 38 19 47 M24 1 C40 10 40 38 29 47" fill="none" stroke="#2b2b2b" stroke-width="2" stroke-linejoin="round"/></svg>
<svg class="r" style="left:183px;top:238px;" width="47" height="52" viewBox="0 0 47 52"><path d="M23.5 1 L46 13 V39 L23.5 51 L1 39 V13 Z" fill="#de9455" stroke="#2b2b2b" stroke-width="2.5" stroke-linejoin="round"/><path d="M1 13 L23.5 25 L46 13 M23.5 25 V51 M12.25 7 L34.75 19 M34.75 7 L12.25 19 M12.25 19 V45 M1 26 L23.5 38 L46 26 M34.75 19 V45" fill="none" stroke="#2b2b2b" stroke-width="2" stroke-linejoin="round"/></svg>
<svg class="r" style="left:254px;top:238px;" width="43" height="51" viewBox="0 0 43 51"><path d="M1.5 10 V41 A20 9 0 0 0 41.5 41 V10 Z" fill="#de9455" stroke="#2b2b2b" stroke-width="2.5" stroke-linejoin="round"/><ellipse cx="21.5" cy="10" rx="20" ry="9" fill="#de9455" stroke="#2b2b2b" stroke-width="2.5" stroke-linejoin="round"/><path d="M1.5 12 H41.5 M12 2 L31 19 M31 2 L12 19 M1.5 26 A20 9 0 0 0 41.5 26 M13 18 V49 M30 18 V49" fill="none" stroke="#2b2b2b" stroke-width="2" stroke-linejoin="round"/></svg>
<svg class="r" style="left:326px;top:238px;" width="41" height="51" viewBox="0 0 41 51"><path d="M20.5 1 L1.5 41 A19 9 0 0 0 39.5 41 Z" fill="#de9455" stroke="#2b2b2b" stroke-width="2.5" stroke-linejoin="round"/><path d="M20.5 1 V50 M8 27 Q20.5 35 33 27" fill="none" stroke="#2b2b2b" stroke-width="2" stroke-linejoin="round"/></svg>
<svg class="r" style="left:395px;top:238px;" width="42" height="52" viewBox="0 0 42 52"><ellipse cx="21" cy="26" rx="19" ry="25" transform="rotate(-18 21 26)" fill="#de9455" stroke="#2b2b2b" stroke-width="2.5" stroke-linejoin="round"/><ellipse cx="22" cy="26" rx="5" ry="14" transform="rotate(-18 22 26)" fill="#444444" stroke="#2b2b2b" stroke-width="2" stroke-linejoin="round"/><path d="M9 8 Q14 14 18 14 M2 28 Q10 28 17 36 M26 38 Q26 46 31 51 M35 18 Q30 18 27 16" fill="none" stroke="#2b2b2b" stroke-width="2" stroke-linejoin="round"/></svg>
<svg class="r" style="left:459px;top:238px;" width="54" height="52" viewBox="0 0 54 52"><path d="M26.5 1 L52 26 L26.5 51 L1 26 Z" fill="#de9455" stroke="#2b2b2b" stroke-width="2.5" stroke-linejoin="round"/><path d="M14 13.5 L39 38.5 M39 13.5 L14 38.5" stroke="#2b2b2b" stroke-width="2" stroke-linejoin="round"/></svg>
<svg class="r" style="left:532px;top:248px;" width="48" height="31" viewBox="0 0 48 31"><ellipse cx="24" cy="15.5" rx="23" ry="14" fill="#de9455" stroke="#2b2b2b" stroke-width="2.5" stroke-linejoin="round"/><path d="M1 15.5 H47 M15 2.5 L33 28.5 M33 2.5 L15 28.5" stroke="#2b2b2b" stroke-width="2" stroke-linejoin="round"/></svg>
<svg class="r" style="left:626px;top:236px;" width="49" height="55" viewBox="0 0 49 55"><path d="M24.5 1 L48 13 V41 L24.5 54 L1 41 V13 Z" fill="#de9455" stroke="#2b2b2b" stroke-width="2.5" stroke-linejoin="round"/><path d="M24.5 1 L11 18 H38 Z M11 18 L24.5 44 L38 18 M1 13 L11 18 M48 13 L38 18 M1 41 L11 18 M48 41 L38 18 M1 41 L24.5 44 L48 41 M24.5 44 V54" fill="none" stroke="#2b2b2b" stroke-width="2" stroke-linejoin="round"/></svg>
<svg class="r" style="left:718px;top:238px;" width="51" height="51" viewBox="0 0 51 51"><path d="M25.5 1 C28 15 36 23 50 25.5 C36 28 28 36 25.5 50 C23 36 15 28 1 25.5 C15 23 23 15 25.5 1 Z" fill="#de9455" stroke="#2b2b2b" stroke-width="2.5" stroke-linejoin="round"/></svg>
<svg class="r" style="left:788px;top:237px;" width="52" height="54" viewBox="0 0 52 54"><path d="M10 10 C22 2 50 12 42 21 C34 30 2 24 9 33 C16 42 46 38 44 46" fill="none" stroke="#2b2b2b" stroke-width="12" stroke-linecap="round"/><path d="M10 10 C22 2 50 12 42 21 C34 30 2 24 9 33 C16 42 46 38 44 46" fill="none" stroke="#de9455" stroke-width="8" stroke-linecap="round"/><path d="M18 12 V20 M30 14 V22 M18 30 V38 M30 30 V38" stroke="#2b2b2b" stroke-width="1.6"/><path d="M16 4 L26 1 M28 50 L38 47" stroke="#bdbdbd" stroke-width="3"/></svg>
<svg class="r" style="left:862px;top:240px;" width="44" height="47" viewBox="0 0 44 47"><path d="M1 1 H43 V14 H40 C39 8 36 7 30 7 H27 V40 C27 42 29 43 33 43 V46 H11 V43 C15 43 17 42 17 40 V7 H14 C8 7 5 8 4 14 H1 Z" fill="#de9455" stroke="#2b2b2b" stroke-width="2" stroke-linejoin="round"/></svg>
<svg class="r" style="left:931px;top:241px;" width="46" height="46" viewBox="0 0 46 46"><rect x="1" y="1" width="44" height="44" fill="#de9455" stroke="#2b2b2b" stroke-width="2" stroke-linejoin="round"/><text x="23" y="30" font-family="Liberation Sans" font-weight="bold" font-size="19" fill="#2b2b2b" text-anchor="middle">svg</text></svg>
<svg class="r" style="left:1023px;top:239px;" width="49" height="50" viewBox="0 0 49 50"><rect x="1" y="1" width="47" height="10" fill="#bdbdbd" stroke="#2b2b2b" stroke-width="2" stroke-linejoin="round"/><rect x="4" y="4" width="3" height="3" fill="#2b2b2b"/><rect x="9" y="4" width="3" height="3" fill="#2b2b2b"/><rect x="14" y="4" width="3" height="3" fill="#2b2b2b"/><rect x="1" y="11" width="47" height="38" fill="#3fa9bb" stroke="#2b2b2b" stroke-width="2" stroke-linejoin="round"/><rect x="5" y="16" width="10" height="10" fill="#bdbdbd" stroke="#2b2b2b" stroke-width="1.6" stroke-linejoin="round"/><rect x="19" y="16" width="10" height="10" fill="#bdbdbd" stroke="#2b2b2b" stroke-width="1.6" stroke-linejoin="round"/><rect x="33" y="16" width="10" height="10" fill="#bdbdbd" stroke="#2b2b2b" stroke-width="1.6" stroke-linejoin="round"/><rect x="5" y="30" width="10" height="10" fill="#bdbdbd" stroke="#2b2b2b" stroke-width="1.6" stroke-linejoin="round"/><rect x="19" y="30" width="10" height="10" fill="#bdbdbd" stroke="#2b2b2b" stroke-width="1.6" stroke-linejoin="round"/><rect x="33" y="30" width="10" height="10" fill="#bdbdbd" stroke="#2b2b2b" stroke-width="1.6" stroke-linejoin="round"/></svg>
<svg class="r" style="left:1117px;top:237px;" width="50" height="47" viewBox="0 0 50 47"><path d="M25 2 V20 M22 30 L4 41 M28 30 L46 41" stroke="#2b2b2b" stroke-width="7" stroke-linecap="round"/><path d="M25 2 V20 M22 30 L4 41 M28 30 L46 41" stroke="#3fa9bb" stroke-width="4" stroke-linecap="round"/><circle cx="25" cy="30" r="14" fill="none" stroke="#bdbdbd" stroke-width="2.6"/><circle cx="25" cy="30" r="6" fill="#bdbdbd" stroke="#2b2b2b" stroke-width="1.2" stroke-linejoin="round"/></svg>
<svg class="r" style="left:1187px;top:239px;" width="51" height="50" viewBox="0 0 51 50"><path d="M14 28 H43 M12 36 H20 M24 36 H38 M12 44 H20 M24 44 H34" stroke="#3fa9bb" stroke-width="3.5"/><circle cx="14" cy="14" r="13" fill="#3fa9bb" stroke="#2b2b2b" stroke-width="2" stroke-linejoin="round"/><path d="M14 6 V15 H21" fill="none" stroke="#2b2b2b" stroke-width="2.6"/><path d="M34 36 L46 48 M46 36 L34 48" stroke="#2b2b2b" stroke-width="6"/><path d="M34 36 L46 48 M46 36 L34 48" stroke="#bdbdbd" stroke-width="3.5"/></svg>
<svg class="r" style="left:1254px;top:236px;" width="56" height="54" viewBox="0 0 56 54"><rect x="0" y="30" width="56" height="24" fill="#2b2b2b"/><path d="M28 2 V32 M14 10 L42 26 M42 10 L14 26" stroke="#bdbdbd" stroke-width="2"/><text x="28" y="51" font-family="Liberation Sans" font-weight="bold" font-size="21" fill="#3fa9bb" text-anchor="middle">0,0,0</text></svg>
<svg class="r" style="left:1351px;top:239px;" width="55" height="55" viewBox="0 0 55 55"><circle cx="20" cy="20" r="19" fill="#de9455" stroke="#2b2b2b" stroke-width="2" stroke-linejoin="round"/><circle cx="32" cy="32" r="17" fill="#444444" stroke="#2b2b2b" stroke-width="5" stroke-linejoin="round"/><circle cx="32" cy="32" r="17" fill="none" stroke="#bdbdbd" stroke-width="2.5" stroke-dasharray="5 3"/></svg>
<svg class="r" style="left:1421px;top:239px;" width="50" height="50" viewBox="0 0 50 50"><circle cx="25" cy="25" r="23.5" fill="none" stroke="#bdbdbd" stroke-width="2.4"/><path d="M8 19 L25 10 L42 19 L25 28 Z" fill="#de9455" stroke="#2b2b2b" stroke-width="1.6" stroke-linejoin="round"/><path d="M8 31 L25 22 L42 31 L25 40 Z" fill="#de9455" stroke="#2b2b2b" stroke-width="1.6" stroke-linejoin="round"/></svg>
<svg class="r" style="left:1491px;top:239px;" width="50" height="50" viewBox="0 0 50 50"><rect x="7" y="1" width="20" height="20" fill="#bdbdbd" stroke="#2b2b2b" stroke-width="2" stroke-linejoin="round"/><rect x="28" y="1" width="20" height="20" fill="#bdbdbd" stroke="#2b2b2b" stroke-width="2" stroke-linejoin="round"/><rect x="28" y="22" width="20" height="20" fill="#bdbdbd" stroke="#2b2b2b" stroke-width="2" stroke-linejoin="round"/><rect x="1" y="28" width="21" height="21" fill="#de9455" stroke="#2b2b2b" stroke-width="2" stroke-linejoin="round"/></svg>
<svg class="r" style="left:1557px;top:240px;" width="58" height="50" viewBox="0 0 58 50"><path d="M1 14 L13 8 L25 14 V38 L13 44 L1 38 Z" fill="#de9455" stroke="#2b2b2b" stroke-width="2" stroke-linejoin="round"/><path d="M1 14 L13 20 L25 14 M13 20 V44" fill="none" stroke="#2b2b2b" stroke-width="1.8" stroke-linejoin="round"/><path d="M33 14 L45 8 L57 14 V38 L45 44 L33 38 Z" fill="#de9455" stroke="#2b2b2b" stroke-width="2" stroke-linejoin="round"/><path d="M33 14 L45 20 L57 14 M45 20 V44" fill="none" stroke="#2b2b2b" stroke-width="1.8" stroke-linejoin="round"/><path d="M29 1 V51" stroke="#2b2b2b" stroke-width="5"/><path d="M29 2 V50" stroke="#bdbdbd" stroke-width="2.5" stroke-dasharray="4 3"/></svg>
<svg class="r" style="left:1627px;top:236px;" width="53" height="53" viewBox="0 0 53 53"><path d="M8 34 L18 26 H32 L38 40 L32 52 H16 Z" fill="#bdbdbd" stroke="#2b2b2b" stroke-width="2" stroke-linejoin="round"/><path d="M6 28 A14 14 0 0 1 22 6" fill="none" stroke="#bdbdbd" stroke-width="5"/><path d="M18 1 L26 6 L18 12 Z" fill="#bdbdbd"/><circle cx="35" cy="20" r="17" fill="#de9455" stroke="#2b2b2b" stroke-width="2" stroke-linejoin="round"/></svg>
<svg class="r" style="left:1701px;top:239px;" width="50" height="50" viewBox="0 0 50 50"><rect x="0" y="16" width="34" height="34" fill="#2b2b2b"/><rect x="2" y="18" width="6" height="6" fill="#bdbdbd"/><rect x="10" y="18" width="6" height="6" fill="#bdbdbd"/><rect x="2" y="26" width="6" height="6" fill="#bdbdbd"/><rect x="10" y="26" width="6" height="6" fill="#bdbdbd"/><rect x="2" y="34" width="6" height="6" fill="#bdbdbd"/><rect x="10" y="34" width="6" height="6" fill="#bdbdbd"/><rect x="18" y="34" width="6" height="6" fill="#bdbdbd"/><rect x="26" y="34" width="6" height="6" fill="#bdbdbd"/><rect x="2" y="42" width="6" height="6" fill="#bdbdbd"/><rect x="10" y="42" width="6" height="6" fill="#bdbdbd"/><rect x="18" y="42" width="6" height="6" fill="#bdbdbd"/><rect x="26" y="42" width="6" height="6" fill="#bdbdbd"/><rect x="17" y="1" width="32" height="32" fill="#de9455" stroke="#2b2b2b" stroke-width="2" stroke-linejoin="round"/><path d="M33 1 V33 M17 17 H49" stroke="#2b2b2b" stroke-width="2" stroke-linejoin="round"/></svg>
<svg class="r" style="left:1771px;top:239px;" width="51" height="51" viewBox="0 0 51 51"><rect x="1" y="17" width="32" height="32" fill="#de9455" stroke="#2b2b2b" stroke-width="2" stroke-linejoin="round"/><path d="M1 17 L33 49" stroke="#2b2b2b" stroke-width="2" stroke-linejoin="round"/><path d="M29 34 A11 15 0 0 1 33 5" fill="none" stroke="#2b2b2b" stroke-width="7"/><path d="M29 34 A11 15 0 0 1 33 5" fill="none" stroke="#bdbdbd" stroke-width="4"/><path d="M41 5 A11 15 0 0 1 45 34" fill="none" stroke="#2b2b2b" stroke-width="7"/><path d="M41 5 A11 15 0 0 1 45 34" fill="none" stroke="#bdbdbd" stroke-width="4"/><path d="M29 0 L39 5 L30 11 Z M37 33 L47 28 L47 39 Z" fill="#bdbdbd" stroke="#2b2b2b" stroke-width="1.2" stroke-linejoin="round"/></svg>
<svg class="r" style="left:1841px;top:239px;" width="52" height="51" viewBox="0 0 52 51"><rect x="1" y="17" width="32" height="32" fill="#de9455" stroke="#2b2b2b" stroke-width="2" stroke-linejoin="round"/><path d="M17 17 V49 M1 33 H33" stroke="#2b2b2b" stroke-width="2" stroke-linejoin="round"/><path d="M29 34 A11 15 0 0 1 33 5" fill="none" stroke="#2b2b2b" stroke-width="7"/><path d="M29 34 A11 15 0 0 1 33 5" fill="none" stroke="#bdbdbd" stroke-width="4"/><path d="M41 5 A11 15 0 0 1 45 34" fill="none" stroke="#2b2b2b" stroke-width="7"/><path d="M41 5 A11 15 0 0 1 45 34" fill="none" stroke="#bdbdbd" stroke-width="4"/><path d="M29 0 L39 5 L30 11 Z M37 33 L47 28 L47 39 Z" fill="#bdbdbd" stroke="#2b2b2b" stroke-width="1.2" stroke-linejoin="round"/></svg>
<svg class="r" style="left:1935px;top:238px;" width="49" height="52" viewBox="0 0 49 52"><path d="M12 44 L36 30 L49 38 L25 52 Z" fill="#bdbdbd" stroke="#2b2b2b" stroke-width="2" stroke-linejoin="round"/><path d="M24 37 L37 45 M18.5 48 L42.5 34" stroke="#2b2b2b" stroke-width="1.8" stroke-linejoin="round"/><path d="M1 8 L12 2 L23 8 V40 L12 46 L1 40 Z" fill="#de9455" stroke="#2b2b2b" stroke-width="2" stroke-linejoin="round"/><path d="M1 8 L12 14 L23 8 M12 14 V46" fill="none" stroke="#2b2b2b" stroke-width="1.8" stroke-linejoin="round"/></svg>
<svg class="r" style="left:2002px;top:234px;" width="59" height="57" viewBox="0 0 59 57"><path d="M25 38 L36 32 L50 40 L25 55 L14 49 Z" fill="#bdbdbd" stroke="#2b2b2b" stroke-width="2" stroke-linejoin="round"/><path d="M1 12 L12 6 L23 12 V44 L12 50 L1 44 Z" fill="#de9455" stroke="#2b2b2b" stroke-width="2" stroke-linejoin="round"/><path d="M1 12 L12 18 L23 12 M12 18 V50" fill="none" stroke="#2b2b2b" stroke-width="1.8" stroke-linejoin="round"/><path d="M46 1 C47 8 50 11 57 12 C50 13 47 16 46 23 C45 16 42 13 35 12 C42 11 45 8 46 1 Z" fill="#bdbdbd" stroke="#2b2b2b" stroke-width="1.2" stroke-linejoin="round"/><path d="M33 20 C34 25 36 27 40 28 C36 29 34 31 33 36 C32 31 30 29 26 28 C30 27 32 25 33 20 Z" fill="#bdbdbd" stroke="#2b2b2b" stroke-width="1.2" stroke-linejoin="round"/><path d="M43 32 C44 36 45 37 48 38 C45 39 44 40 43 44 C42 40 41 39 38 38 C41 37 42 36 43 32 Z" fill="#bdbdbd" stroke="#2b2b2b" stroke-width="1.2" stroke-linejoin="round"/></svg>
<svg class="r" style="left:2071px;top:238px;" width="58" height="52" viewBox="0 0 58 52"><path d="M1 9 L14 1.5 L27 9 L14 16.5 Z" fill="#bdbdbd" stroke="#2b2b2b" stroke-width="1.8" stroke-linejoin="round" /><path d="M15 17 L28 9.5 L41 17 L28 24.5 Z" fill="#bdbdbd" stroke="#2b2b2b" stroke-width="1.8" stroke-linejoin="round" /><path d="M29 25 L42 17.5 L55 25 L42 32.5 Z" fill="#bdbdbd" stroke="#2b2b2b" stroke-width="1.8" stroke-linejoin="round" /><path d="M20 17 L28 12.5 L36 17 L28 21.5 Z" fill="none" stroke="#de9455" stroke-width="2" stroke-dasharray="2 2"/><path d="M1 27 L14 19.5 L27 27 L14 34.5 Z" fill="#bdbdbd" stroke="#2b2b2b" stroke-width="1.8" stroke-linejoin="round" /><path d="M15 35 L28 27.5 L41 35 L28 42.5 Z" fill="#de9455" stroke="#2b2b2b" stroke-width="1.8" stroke-linejoin="round" /><path d="M29 43 L42 35.5 L55 43 L42 50.5 Z" fill="#bdbdbd" stroke="#2b2b2b" stroke-width="1.8" stroke-linejoin="round" /></svg>
<svg class="r" style="left:2146px;top:237px;" width="48" height="54" viewBox="0 0 48 54"><path d="M23.5 1 L46 13 V40 L23.5 52 L1 40 V13 Z" fill="#de9455" stroke="#2b2b2b" stroke-width="2.5" stroke-linejoin="round"/><path d="M4 15 L23.5 26 L43 15" fill="none" stroke="#bdbdbd" stroke-width="5"/><path d="M23.5 26 V50" stroke="#bdbdbd" stroke-width="5"/><path d="M1 13 L20 24 M46 13 L27 24 M20 24 V52 M27 24 V52" fill="none" stroke="#2b2b2b" stroke-width="1.6" stroke-linejoin="round"/></svg>
<svg class="r" style="left:2212px;top:236px;" width="57" height="56" viewBox="0 0 57 56"><rect x="6" y="22" width="30" height="28" fill="#bdbdbd" stroke="#2b2b2b" stroke-width="2" stroke-linejoin="round"/><path d="M21 22 V50 M6 36 H36" stroke="#2b2b2b" stroke-width="1.4" stroke-linejoin="round"/><path d="M24 4 H55 V35 H40 L36 30 H26 Z" fill="#de9455" stroke="#2b2b2b" stroke-width="2" stroke-linejoin="round"/><path d="M40 4 V20 L30 24 M40 20 H55" fill="none" stroke="#2b2b2b" stroke-width="1.6" stroke-linejoin="round"/><rect x="25" y="25" width="8" height="8" fill="#de9455" stroke="#2b2b2b" stroke-width="1.6" stroke-linejoin="round"/><rect x="2" y="30" width="8" height="8" fill="#bdbdbd" stroke="#2b2b2b" stroke-width="2" stroke-linejoin="round"/><rect x="2" y="46" width="8" height="8" fill="#bdbdbd" stroke="#2b2b2b" stroke-width="2" stroke-linejoin="round"/><rect x="19" y="46" width="8" height="8" fill="#bdbdbd" stroke="#2b2b2b" stroke-width="2" stroke-linejoin="round"/></svg>
<svg class="r" style="left:2286px;top:239px;" width="49" height="49" viewBox="0 0 49 49"><circle cx="24.5" cy="24.5" r="23" fill="#de9455" stroke="#2b2b2b" stroke-width="2.5" stroke-linejoin="round"/><circle cx="24.5" cy="24.5" r="15" fill="none" stroke="#2b2b2b" stroke-width="2" stroke-linejoin="round"/><path d="M24.5 1.5 V47.5 M1.5 24.5 H47.5 M8.2 8.2 L40.8 40.8 M40.8 8.2 L8.2 40.8" stroke="#2b2b2b" stroke-width="2" stroke-linejoin="round"/></svg>
<svg class="r" style="left:2355px;top:239px;" width="50" height="50" viewBox="0 0 50 50"><rect x="17" y="1" width="32" height="32" fill="#bdbdbd" stroke="#2b2b2b" stroke-width="2" stroke-linejoin="round"/><path d="M17 33 L49 1" stroke="#2b2b2b" stroke-width="1.6" stroke-linejoin="round"/><rect x="1" y="17" width="32" height="32" fill="#de9455" stroke="#2b2b2b" stroke-width="2" stroke-linejoin="round"/><path d="M1 17 L33 49" stroke="#2b2b2b" stroke-width="2" stroke-linejoin="round"/></svg>
<svg class="r" style="left:2419px;top:247px;" width="58" height="37" viewBox="0 0 58 37"><path d="M26 18 L40 10 L57 20 L43 28 Z M14 26 L28 18 L43 28 L29 36 Z M28 18 L43 28" fill="#bdbdbd" stroke="#2b2b2b" stroke-width="1.8" stroke-linejoin="round"/><path d="M26 26 L40 18 L57 28 L43 36 L29 36 Z" fill="#bdbdbd" stroke="#2b2b2b" stroke-width="1.8" stroke-linejoin="round"/><path d="M1 23 L15 15 L29 23 L15 31 Z" fill="#de9455" stroke="#2b2b2b" stroke-width="1.8" stroke-linejoin="round"/><path d="M1 12 L15 4 L29 12 L15 20 Z" fill="#de9455" stroke="#2b2b2b" stroke-width="1.8" stroke-linejoin="round"/></svg>
<svg class="r" style="left:2495px;top:239px;" width="50" height="50" viewBox="0 0 50 50"><rect x="5" y="5" width="39" height="40" fill="none" stroke="#2b2b2b" stroke-width="5"/><rect x="5" y="5" width="39" height="40" fill="none" stroke="#bdbdbd" stroke-width="2.2"/><path d="M8 8 L41 42 M41 8 L8 42" stroke="#de9455" stroke-width="3"/><rect x="18.5" y="19" width="12" height="12" fill="#de9455" stroke="#2b2b2b" stroke-width="1" stroke-linejoin="round"/><rect x="21.5" y="22" width="6" height="6" fill="#2b2b2b"/><rect x="1" y="1" width="9" height="9" fill="#bdbdbd" stroke="#2b2b2b" stroke-width="2.2" stroke-linejoin="round"/><rect x="4" y="4" width="3" height="3" fill="#2b2b2b"/><rect x="39" y="1" width="9" height="9" fill="#bdbdbd" stroke="#2b2b2b" stroke-width="2.2" stroke-linejoin="round"/><rect x="42" y="4" width="3" height="3" fill="#2b2b2b"/><rect x="1" y="40" width="9" height="9" fill="#bdbdbd" stroke="#2b2b2b" stroke-width="2.2" stroke-linejoin="round"/><rect x="4" y="43" width="3" height="3" fill="#2b2b2b"/><rect x="39" y="40" width="9" height="9" fill="#bdbdbd" stroke="#2b2b2b" stroke-width="2.2" stroke-linejoin="round"/><rect x="42" y="43" width="3" height="3" fill="#2b2b2b"/></svg>
<svg class="r" style="left:666px;top:279px;" width="15" height="15" viewBox="0 0 15 15"><path d="M1 14 L14 1 V14 Z" fill="#bdbdbd" stroke="#2b2b2b" stroke-width="1.4" stroke-linejoin="round"/></svg>
<svg class="r" style="left:760px;top:279px;" width="15" height="15" viewBox="0 0 15 15"><path d="M1 14 L14 1 V14 Z" fill="#bdbdbd" stroke="#2b2b2b" stroke-width="1.4" stroke-linejoin="round"/></svg>
<svg class="r" style="left:1392px;top:280px;" width="15" height="15" viewBox="0 0 15 15"><path d="M1 14 L14 1 V14 Z" fill="#bdbdbd" stroke="#2b2b2b" stroke-width="1.4" stroke-linejoin="round"/></svg>
<div class="r" style="left:2579px;top:230px;width:24px;height:77px;background:#2e2e2e;"></div>
<svg class="r" style="left:2582px;top:236px;" width="17" height="10" viewBox="0 0 17 10"><path d="M0 10 L17 10 L8.5 0 Z" fill="#bbb"/></svg>
<div class="r" style="left:2581px;top:255px;width:21px;height:22px;background:#5d5d5d;border-radius:8px;"></div>
<svg class="r" style="left:2582px;top:289px;" width="17" height="10" viewBox="0 0 17 10"><path d="M0 0 L17 0 L8.5 10 Z" fill="#bbb"/></svg>
<div class="r" style="left:23px;top:316px;width:2590px;height:5px;background:#2e2e2e;"></div>
<svg class="r" style="left:24px;top:326px;" width="80" height="12" viewBox="0 0 80 12"><g fill="#8c8c8c"><rect x="0" y="0" width="2" height="2"/><rect x="0" y="6" width="2" height="2"/><rect x="6" y="0" width="2" height="2"/><rect x="6" y="6" width="2" height="2"/><rect x="12" y="0" width="2" height="2"/><rect x="12" y="6" width="2" height="2"/><rect x="18" y="0" width="2" height="2"/><rect x="18" y="6" width="2" height="2"/><rect x="24" y="0" width="2" height="2"/><rect x="24" y="6" width="2" height="2"/><rect x="30" y="0" width="2" height="2"/><rect x="30" y="6" width="2" height="2"/><rect x="36" y="0" width="2" height="2"/><rect x="36" y="6" width="2" height="2"/><rect x="42" y="0" width="2" height="2"/><rect x="42" y="6" width="2" height="2"/><rect x="48" y="0" width="2" height="2"/><rect x="48" y="6" width="2" height="2"/><rect x="54" y="0" width="2" height="2"/><rect x="54" y="6" width="2" height="2"/><rect x="60" y="0" width="2" height="2"/><rect x="60" y="6" width="2" height="2"/><rect x="66" y="0" width="2" height="2"/><rect x="66" y="6" width="2" height="2"/><rect x="72" y="0" width="2" height="2"/><rect x="72" y="6" width="2" height="2"/><rect x="78" y="0" width="2" height="2"/><rect x="78" y="6" width="2" height="2"/></g></svg>
<div class="r" style="left:29px;top:343px;width:72px;height:72px;background:#5285a6;border-radius:3px;"></div>
<div class="r" style="left:29px;top:1179px;width:72px;height:48px;background:#5285a6;"></div>
<svg class="r" style="left:51px;top:352px;" width="35" height="52" viewBox="0 0 35 52"><path d="M2 1 L32 30 L20 31 L26 46 L18 50 L12 35 L2 45 Z" fill="#bdbdbd" stroke="#2b2b2b" stroke-width="2" stroke-linejoin="round"/></svg>
<svg class="r" style="left:38px;top:426px;" width="50" height="56" viewBox="0 0 50 56"><ellipse cx="23" cy="17" rx="21" ry="11" transform="rotate(-28 23 17)" fill="none" stroke="#2b2b2b" stroke-width="6"/><ellipse cx="23" cy="17" rx="21" ry="11" transform="rotate(-28 23 17)" fill="none" stroke="#3fa9bb" stroke-width="3" stroke-dasharray="5 3"/><path d="M24 14 L46 35 L37 36 L42 47 L36 50 L31 39 L24 45 Z" fill="#bdbdbd" stroke="#2b2b2b" stroke-width="2" stroke-linejoin="round"/></svg>
<svg class="r" style="left:38px;top:499px;" width="55" height="56" viewBox="0 0 55 56"><ellipse cx="21" cy="40" rx="20" ry="11" transform="rotate(35 21 40)" fill="none" stroke="#2b2b2b" stroke-width="6"/><ellipse cx="21" cy="40" rx="20" ry="11" transform="rotate(35 21 40)" fill="none" stroke="#3fa9bb" stroke-width="3" stroke-dasharray="5 3"/><path d="M33 24 L51 5" stroke="#2b2b2b" stroke-width="8" stroke-linecap="round"/><path d="M33 24 L51 5" stroke="#bdbdbd" stroke-width="4.5" stroke-linecap="round"/><path d="M16 33 C22 24 30 22 34 25 C36 30 30 36 16 33 Z" fill="#bdbdbd" stroke="#2b2b2b" stroke-width="2" stroke-linejoin="round"/></svg>
<svg class="r" style="left:35px;top:570px;" width="61" height="61" viewBox="0 0 61 61"><rect x="17" y="17" width="26" height="26" fill="#bdbdbd" stroke="#2b2b2b" stroke-width="2" stroke-linejoin="round"/><path d="M30 1 L39 9 H21 Z M30 59 L39 51 H21 Z M1 30 L9 21 V39 Z M59 30 L51 21 V39 Z" fill="#3fa9bb" stroke="#2b2b2b" stroke-width="1.6" stroke-linejoin="round"/></svg>
<svg class="r" style="left:36px;top:647px;" width="60" height="55" viewBox="0 0 60 55"><path d="M28 52 A24 24 0 1 1 52 28" fill="none" stroke="#2b2b2b" stroke-width="7"/><path d="M28 52 A24 24 0 1 1 52 28" fill="none" stroke="#3fa9bb" stroke-width="3.5"/><path d="M43 27 H59 L51 38 Z" fill="#3fa9bb" stroke="#2b2b2b" stroke-width="1.6" stroke-linejoin="round"/><path d="M29 14 L44 29 L29 44 L14 29 Z" fill="#bdbdbd" stroke="#2b2b2b" stroke-width="2" stroke-linejoin="round"/></svg>
<svg class="r" style="left:39px;top:724px;" width="53" height="52" viewBox="0 0 53 52"><rect x="8" y="2" width="42" height="44" fill="none" stroke="#2b2b2b" stroke-width="6"/><rect x="8" y="2" width="42" height="44" fill="none" stroke="#3fa9bb" stroke-width="3" stroke-dasharray="4 3"/><path d="M19 22 H31 V34" fill="none" stroke="#2b2b2b" stroke-width="6"/><path d="M19 22 H31 V34" fill="none" stroke="#3fa9bb" stroke-width="3"/><rect x="1" y="27" width="25" height="24" fill="#bdbdbd" stroke="#2b2b2b" stroke-width="2" stroke-linejoin="round"/></svg>
<svg class="r" style="left:35px;top:964px;" width="58" height="58" viewBox="0 0 58 58"><rect x="1" y="1" width="56" height="56" fill="#bdbdbd" stroke="#2b2b2b" stroke-width="2" stroke-linejoin="round"/><rect x="6" y="6" width="46" height="46" fill="#bdbdbd" stroke="#2b2b2b" stroke-width="2"/><path d="M29 14 L37 20 L29 26 L21 20 Z M29 32 L37 38 L29 44 L21 38 Z M18 23 L26 29 L18 35 L10 29 Z M40 23 L48 29 L40 35 L32 29 Z" fill="#2b2b2b"/></svg>
<svg class="r" style="left:35px;top:1037px;" width="60" height="60" viewBox="0 0 60 60"><rect x="1" y="1" width="28" height="28" fill="#2b2b2b"/><rect x="3" y="3" width="24" height="24" fill="#2b2b2b" stroke="#bdbdbd" stroke-width="2.5"/><path d="M15 8 V22 M8 15 H22" stroke="#bdbdbd" stroke-width="2.5"/><rect x="31" y="1" width="28" height="28" fill="#bdbdbd" stroke="#2b2b2b" stroke-width="2" stroke-linejoin="round"/><path d="M45 10 L52 15 L45 20 L38 15 Z" fill="#2b2b2b"/><rect x="1" y="31" width="28" height="28" fill="#2b2b2b"/><rect x="3" y="33" width="24" height="24" fill="#2b2b2b" stroke="#bdbdbd" stroke-width="2.5"/><path d="M15 38 V52 M8 45 H22" stroke="#bdbdbd" stroke-width="2.5"/><rect x="31" y="31" width="28" height="28" fill="#2b2b2b"/><rect x="33" y="33" width="24" height="24" fill="#2b2b2b" stroke="#bdbdbd" stroke-width="2.5"/><path d="M45 38 V52 M38 45 H52" stroke="#bdbdbd" stroke-width="2.5"/></svg>
<svg class="r" style="left:35px;top:1111px;" width="60" height="60" viewBox="0 0 60 60"><rect x="1" y="1" width="28" height="58" fill="#2b2b2b"/><rect x="3" y="3" width="24" height="54" fill="#2b2b2b" stroke="#bdbdbd" stroke-width="2.5"/><path d="M15 23 V37 M8 30 H22" stroke="#bdbdbd" stroke-width="2.5"/><rect x="31" y="1" width="28" height="58" fill="#bdbdbd" stroke="#2b2b2b" stroke-width="2" stroke-linejoin="round"/><path d="M45 25 L52 30 L45 35 L38 30 Z" fill="#2b2b2b"/></svg>
<svg class="r" style="left:29px;top:1172px;" width="70" height="56" viewBox="0 0 70 56"><rect x="6" y="6" width="58" height="48" fill="none" stroke="#2b2b2b" stroke-width="4"/><rect x="8" y="8" width="54" height="46" fill="none" stroke="#bdbdbd" stroke-width="2"/><path d="M19 18 V52 M19 29 H30 M19 40 H30" stroke="#999" stroke-width="2"/><rect x="16" y="14" width="7" height="7" fill="#bdbdbd" stroke="#2b2b2b" stroke-width="1.2" stroke-linejoin="round"/><path d="M23 17.5 H40" stroke="#bdbdbd" stroke-width="3"/><rect x="28" y="26" width="7" height="7" fill="#bdbdbd" stroke="#2b2b2b" stroke-width="1.2" stroke-linejoin="round"/><path d="M35 29.5 H52" stroke="#bdbdbd" stroke-width="3"/><rect x="28" y="38" width="7" height="7" fill="#bdbdbd" stroke="#2b2b2b" stroke-width="1.2" stroke-linejoin="round"/><path d="M35 41.5 H48" stroke="#bdbdbd" stroke-width="3"/></svg>
<svg class="r" style="left:35px;top:1231px;" width="60" height="65" viewBox="0 0 60 65"><path d="M1 10 L9 3 V50 L1 55 Z" fill="#7fc6e4"/><rect x="9" y="1" width="50" height="48" fill="#36a3cf"/><rect x="7" y="47" width="52" height="17" fill="#336a82"/><path d="M57 3 H59 V64 H57 Z" fill="#2a5a70"/><text x="33" y="37" font-family="Liberation Sans" font-weight="bold" font-size="33" fill="#fff" text-anchor="middle">M</text><text x="33" y="61" font-family="Liberation Sans" font-weight="bold" font-size="12" fill="#fff" text-anchor="middle">AYA</text></svg>
<div class="r" style="left:29px;top:944px;width:72px;height:2px;background:#7a7a7a;"></div>
<div class="r" style="left:107px;top:321px;width:4px;height:984px;background:#2e2e2e;"></div>
<div class="r" style="left:107px;top:321px;width:371px;height:36px;background:#2e2e2e;"></div>
<div class="r" style="left:115px;top:325px;width:109px;height:32px;background:#444444;border-radius:2px 2px 0 0;"></div>
<div class="t" style="left:129.50px;top:331.07px;font-size:22px;line-height:22px;color:#d8d8d8;">Outliner</div>
<div class="t" style="left:132.00px;top:369.37px;font-size:22px;line-height:22px;color:#c4c4c4;">Display</div>
<div class="t" style="left:232.00px;top:369.37px;font-size:22px;line-height:22px;color:#c4c4c4;">Show</div>
<div class="t" style="left:315.60px;top:369.37px;font-size:22px;line-height:22px;color:#c4c4c4;">Help</div>
<div class="r" style="left:170px;top:409px;width:301px;height:36px;background:#2e2e2e;border-radius:2px;"></div>
<div class="t" style="left:175.00px;top:417.17px;font-size:22px;line-height:22px;color:#7a7a7a;">Search...</div>
<svg class="r" style="left:446px;top:423px;" width="20" height="11" viewBox="0 0 20 11"><path d="M0 0 L20 0 L10.0 11 Z" fill="#bbbbbb"/></svg>
<div class="r" style="left:117px;top:454px;width:355px;height:833px;background:#2e2e2e;"></div>
<div class="r" style="left:117px;top:694px;width:331px;height:39px;background:#3d4a56;"></div>
<div class="r" style="left:117px;top:733px;width:331px;height:81px;background:#5285a6;"></div>
<svg class="r" style="left:187px;top:466px;top:466px;" width="30" height="17" viewBox="0 0 30 17"><rect x="0" y="1" width="19" height="14" rx="1" fill="#bdbdbd"/><path d="M21 8 L29 0 V16 Z" fill="#bdbdbd"/></svg>
<div class="t" style="left:225.50px;top:464.37px;font-size:22px;line-height:22px;color:#808080;">persp</div>
<svg class="r" style="left:187px;top:466px;top:506px;" width="30" height="17" viewBox="0 0 30 17"><rect x="0" y="1" width="19" height="14" rx="1" fill="#bdbdbd"/><path d="M21 8 L29 0 V16 Z" fill="#bdbdbd"/></svg>
<div class="t" style="left:225.50px;top:504.37px;font-size:22px;line-height:22px;color:#808080;">top</div>
<svg class="r" style="left:187px;top:466px;top:545.8px;" width="30" height="17" viewBox="0 0 30 17"><rect x="0" y="1" width="19" height="14" rx="1" fill="#bdbdbd"/><path d="M21 8 L29 0 V16 Z" fill="#bdbdbd"/></svg>
<div class="t" style="left:225.50px;top:544.17px;font-size:22px;line-height:22px;color:#808080;">front</div>
<svg class="r" style="left:187px;top:466px;top:585.7px;" width="30" height="17" viewBox="0 0 30 17"><rect x="0" y="1" width="19" height="14" rx="1" fill="#bdbdbd"/><path d="M21 8 L29 0 V16 Z" fill="#bdbdbd"/></svg>
<div class="t" style="left:225.50px;top:584.07px;font-size:22px;line-height:22px;color:#808080;">side</div>
<svg class="r" style="left:186px;top:622px;" width="34" height="25" viewBox="0 0 34 25"><path d="M16.5 1 L23.8 6 L16.5 11 L9.2 6 Z" fill="#bdbdbd"/><path d="M8 7 L15.3 12 L8 17 L0.7000000000000002 12 Z" fill="#bdbdbd"/><path d="M25 7 L32.3 12 L25 17 L17.7 12 Z" fill="#bdbdbd"/><path d="M16.5 13 L23.8 18 L16.5 23 L9.2 18 Z" fill="#bdbdbd"/></svg>
<div class="t" style="left:225.50px;top:623.87px;font-size:22px;line-height:22px;color:#c8c8c8;letter-spacing:-0.481px;">concrete_cat_statue</div>
<svg class="r" style="left:186px;top:662px;" width="34" height="25" viewBox="0 0 34 25"><path d="M16.5 1 L23.8 6 L16.5 11 L9.2 6 Z" fill="#bdbdbd"/><path d="M8 7 L15.3 12 L8 17 L0.7000000000000002 12 Z" fill="#bdbdbd"/><path d="M25 7 L32.3 12 L25 17 L17.7 12 Z" fill="#bdbdbd"/><path d="M16.5 13 L23.8 18 L16.5 23 L9.2 18 Z" fill="#bdbdbd"/></svg>
<div class="t" style="left:225.50px;top:663.67px;font-size:22px;line-height:22px;color:#c8c8c8;">background</div>
<div class="r" style="left:159px;top:704px;width:16px;height:16px;border:2px solid #999;"></div>
<div class="r" style="left:163px;top:712px;width:8px;height:2px;background:#999;"></div>
<div class="r" style="left:168px;top:722px;width:2px;height:72px;background:#999;"></div>
<div class="r" style="left:168px;top:753px;width:21px;height:2px;background:#999;"></div>
<div class="r" style="left:168px;top:792px;width:21px;height:2px;background:#999;"></div>
<svg class="r" style="left:183px;top:749px;" width="10" height="10" viewBox="0 0 10 10"><path d="M2.5 0 H7.5 L10 5 L7.5 10 H2.5 L0 5 Z" fill="#999"/></svg>
<svg class="r" style="left:183px;top:788px;" width="10" height="10" viewBox="0 0 10 10"><path d="M2.5 0 H7.5 L10 5 L7.5 10 H2.5 L0 5 Z" fill="#999"/></svg>
<svg class="r" style="left:186px;top:696px;" width="31" height="35" viewBox="0 0 31 35"><path d="M1 9 L15 1 V18 L1 26 Z" fill="#bdbdbd" stroke="#2b2b2b" stroke-width="1.8" stroke-linejoin="round"/><path d="M4 11 L12 6.5" stroke="#2b2b2b" stroke-width="1.4"/><path d="M7 13 L21 5 V22 L7 30 Z" fill="#bdbdbd" stroke="#2b2b2b" stroke-width="1.8" stroke-linejoin="round"/><path d="M10 15 L18 10.5" stroke="#2b2b2b" stroke-width="1.4"/><path d="M13 17 L27 9 V26 L13 34 Z" fill="#bdbdbd" stroke="#2b2b2b" stroke-width="1.8" stroke-linejoin="round"/><path d="M16 19 L24 14.5" stroke="#2b2b2b" stroke-width="1.4"/></svg>
<div class="t" style="left:225.00px;top:704.07px;font-size:22px;line-height:22px;color:#c8c8c8;">camera1_group</div>
<svg class="r" style="left:210px;top:745px;" width="33" height="19" viewBox="0 0 33 19"><rect x="1" y="1" width="21" height="16" rx="2" fill="#bdbdbd" stroke="#2b2b2b" stroke-width="2" stroke-linejoin="round"/><path d="M23 9 L31 1 V18 Z" fill="#bdbdbd" stroke="#2b2b2b" stroke-width="2" stroke-linejoin="round"/></svg>
<div class="t" style="left:249.00px;top:744.37px;font-size:22px;line-height:22px;color:#f5f5f5;">camera1</div>
<svg class="r" style="left:212px;top:776px;" width="28" height="37" viewBox="0 0 28 37"><path d="M14 3.5 V33.5 M2.5 11 L25.5 25 M25.5 11 L2.5 25" stroke="#2b2b2b" stroke-width="7" stroke-linecap="round"/><path d="M14 3.5 V33.5 M2.5 11 L25.5 25 M25.5 11 L2.5 25" stroke="#3fa9bb" stroke-width="3.8" stroke-linecap="round"/></svg>
<div class="t" style="left:249.00px;top:784.37px;font-size:22px;line-height:22px;color:#f5f5f5;">camera1_aim</div>
<svg class="r" style="left:186px;top:818px;" width="32" height="32" viewBox="0 0 32 32"><circle cx="16" cy="16" r="15" fill="none" stroke="#bdbdbd" stroke-width="2"/><rect x="15" y="8" width="10" height="14" fill="#3fa9bb"/><circle cx="12" cy="19" r="7" fill="#bdbdbd" stroke="#2b2b2b" stroke-width="1.4" stroke-linejoin="round"/></svg>
<div class="t" style="left:225.00px;top:823.87px;font-size:22px;line-height:22px;color:#c8c8c8;">defaultLightSet</div>
<svg class="r" style="left:186px;top:858px;" width="32" height="32" viewBox="0 0 32 32"><circle cx="16" cy="16" r="15" fill="none" stroke="#bdbdbd" stroke-width="2"/><rect x="15" y="8" width="10" height="14" fill="#3fa9bb"/><circle cx="12" cy="19" r="7" fill="#bdbdbd" stroke="#2b2b2b" stroke-width="1.4" stroke-linejoin="round"/></svg>
<div class="t" style="left:225.00px;top:863.37px;font-size:22px;line-height:22px;color:#c8c8c8;">defaultObjectSet</div>
<svg class="r" style="left:126px;top:414px;" width="30" height="32" viewBox="0 0 30 32"><g fill="#6a6a6a"><path d="M0 0 L11 6 L0 12 Z M19 0 L30 6 L19 12 Z M0 20 L11 26 L0 32 Z M19 20 L30 26 L19 32 Z"/><rect x="11" y="0" width="8" height="2"/><rect x="11" y="30" width="8" height="2"/><rect x="4" y="13" width="2" height="6"/><rect x="24" y="13" width="2" height="6"/></g></svg>
<svg class="r" style="left:451px;top:460px;" width="20" height="11" viewBox="0 0 20 11"><path d="M0 11 L20 11 L10 0 Z" fill="#aaa"/></svg>
<div class="r" style="left:450px;top:479px;width:22px;height:758px;background:#5d5d5d;border-radius:10px;"></div>
<svg class="r" style="left:451px;top:1245px;" width="20" height="11" viewBox="0 0 20 11"><path d="M0 0 L20 0 L10 11 Z" fill="#aaa"/></svg>
<svg class="r" style="left:124px;top:1267px;" width="10" height="18" viewBox="0 0 10 18"><path d="M10 0 L10 18 L0 9 Z" fill="#aaa"/></svg>
<div class="r" style="left:142px;top:1265px;width:281px;height:22px;background:#5d5d5d;border-radius:10px;"></div>
<svg class="r" style="left:431px;top:1267px;" width="10" height="18" viewBox="0 0 10 18"><path d="M0 0 L0 18 L10 9 Z" fill="#aaa"/></svg>
<svg class="r" style="left:234px;top:1292px;" width="118" height="6" viewBox="0 0 118 6"><g fill="#8c8c8c"><rect x="0" y="0" width="2" height="2"/><rect x="6" y="0" width="2" height="2"/><rect x="12" y="0" width="2" height="2"/><rect x="18" y="0" width="2" height="2"/><rect x="24" y="0" width="2" height="2"/><rect x="30" y="0" width="2" height="2"/><rect x="36" y="0" width="2" height="2"/><rect x="42" y="0" width="2" height="2"/><rect x="48" y="0" width="2" height="2"/><rect x="54" y="0" width="2" height="2"/><rect x="60" y="0" width="2" height="2"/><rect x="66" y="0" width="2" height="2"/><rect x="72" y="0" width="2" height="2"/><rect x="78" y="0" width="2" height="2"/><rect x="84" y="0" width="2" height="2"/><rect x="90" y="0" width="2" height="2"/><rect x="96" y="0" width="2" height="2"/><rect x="102" y="0" width="2" height="2"/><rect x="108" y="0" width="2" height="2"/><rect x="114" y="0" width="2" height="2"/></g></svg>
<div class="r" style="left:478px;top:321px;width:4px;height:984px;background:#2e2e2e;"></div>
<div class="t" style="left:503.30px;top:335.07px;font-size:22px;line-height:22px;color:#c4c4c4;">View</div>
<div class="t" style="left:580.40px;top:335.07px;font-size:22px;line-height:22px;color:#c4c4c4;">Shading</div>
<div class="t" style="left:689.70px;top:335.07px;font-size:22px;line-height:22px;color:#c4c4c4;">Lighting</div>
<div class="t" style="left:799.00px;top:335.07px;font-size:22px;line-height:22px;color:#c4c4c4;">Show</div>
<div class="t" style="left:882.90px;top:335.07px;font-size:22px;line-height:22px;color:#c4c4c4;">Renderer</div>
<div class="t" style="left:1001.20px;top:335.07px;font-size:22px;line-height:22px;color:#c4c4c4;">Panels</div>
<div class="r" style="left:495px;top:370px;width:2px;height:32px;background:#8a8a8a;"></div>
<div class="r" style="left:493px;top:378.0px;width:6px;height:16.0px;background:#8a8a8a;"></div>
<div class="r" style="left:705px;top:370px;width:2px;height:32px;background:#8a8a8a;"></div>
<div class="r" style="left:703px;top:378.0px;width:6px;height:16.0px;background:#8a8a8a;"></div>
<div class="r" style="left:993px;top:370px;width:2px;height:32px;background:#8a8a8a;"></div>
<div class="r" style="left:991px;top:378.0px;width:6px;height:16.0px;background:#8a8a8a;"></div>
<div class="r" style="left:1281px;top:370px;width:2px;height:32px;background:#8a8a8a;"></div>
<div class="r" style="left:1279px;top:378.0px;width:6px;height:16.0px;background:#8a8a8a;"></div>
<svg class="r" style="left:509px;top:370px;" width="34" height="33" viewBox="0 0 34 33"><path d="M0 3 L5 1 V27 L0 29 Z" fill="#7fc6e4"/><rect x="5" y="0" width="24" height="26" fill="#36a3cf"/><rect x="3" y="25" width="28" height="7" fill="#336a82"/><path d="M29 3 H32 V32 H29 Z" fill="#336a82"/><text x="17" y="20" font-family="Liberation Sans" font-weight="bold" font-size="17" fill="#fff" text-anchor="middle">A</text></svg>
<svg class="r" style="left:548px;top:371px;" width="30" height="30" viewBox="0 0 30 30"><rect x="7" y="7" width="16" height="16" fill="#3fa9bb" stroke="#2b2b2b" stroke-width="2" stroke-linejoin="round"/><path d="M1 5 H29 M1 24 H29 M6 0 V29 M24 0 V29" stroke="#2b2b2b" stroke-width="3.5"/><path d="M1 5 H29 M1 24 H29 M6 0 V29 M24 0 V29" stroke="#e8e8e8" stroke-width="1.6"/></svg>
<svg class="r" style="left:586px;top:373px;" width="30" height="28" viewBox="0 0 30 28"><rect x="1" y="1" width="28" height="26" fill="#555"/><rect x="1" y="9" width="20" height="17" fill="none" stroke="#3a3a3a" stroke-width="1.6" stroke-dasharray="2 2"/></svg>
<svg class="r" style="left:626px;top:373px;" width="26" height="26" viewBox="0 0 26 26"><circle cx="13" cy="13" r="12.5" fill="#5a5a5a"/><path d="M1 18 A12.5 12.5 0 0 1 21 4 Z" fill="#4f5560"/><path d="M1 18 L25 9" stroke="#444" stroke-width="1"/></svg>
<svg class="r" style="left:661px;top:371px;" width="32" height="30" viewBox="0 0 32 30"><rect x="9" y="1" width="22" height="18" fill="#4a5a4a" stroke="#3a3a3a" stroke-width="1.2"/><rect x="5" y="5" width="22" height="18" fill="#5a4a4a" stroke="#3a3a3a" stroke-width="1.2"/><rect x="1" y="10" width="24" height="19" fill="#4a5a66" stroke="#3a3a3a" stroke-width="1.4"/><path d="M4 27 L10 19 L14 22 L19 16 L22 27 Z" fill="#667"/></svg>
<svg class="r" style="left:721px;top:377px;" width="32" height="20" viewBox="0 0 32 20"><rect x="1" y="3" width="20" height="15" rx="1" fill="#bdbdbd" stroke="#2b2b2b" stroke-width="1.8" stroke-linejoin="round"/><path d="M22 10.5 L30 2 V19 Z" fill="#bdbdbd" stroke="#2b2b2b" stroke-width="1.8" stroke-linejoin="round"/></svg>
<svg class="r" style="left:759px;top:370px;" width="31" height="31" viewBox="0 0 31 31"><rect x="1" y="7" width="19" height="15" fill="#bdbdbd" stroke="#2b2b2b" stroke-width="1.8" stroke-linejoin="round"/><path d="M21 13 L30 4 V22 Z" fill="#bdbdbd" stroke="#2b2b2b" stroke-width="1.8" stroke-linejoin="round"/><path d="M6 19 V15 A5 5 0 0 1 16 15 V19" fill="none" stroke="#2b2b2b" stroke-width="5"/><path d="M6 19 V15 A5 5 0 0 1 16 15 V19" fill="none" stroke="#3fa9bb" stroke-width="2.5"/><rect x="3" y="18" width="16" height="12" fill="#3fa9bb" stroke="#2b2b2b" stroke-width="1.6" stroke-linejoin="round"/><rect x="10" y="22" width="2" height="5" fill="#2b2b2b"/></svg>
<svg class="r" style="left:798px;top:370px;" width="31" height="31" viewBox="0 0 31 31"><rect x="1" y="7" width="19" height="15" fill="#bdbdbd" stroke="#2b2b2b" stroke-width="1.8" stroke-linejoin="round"/><path d="M21 13 L30 4 V22 Z" fill="#bdbdbd" stroke="#2b2b2b" stroke-width="1.8" stroke-linejoin="round"/><circle cx="10" cy="21" r="7.2" fill="#3fa9bb" stroke="#2b2b2b" stroke-width="1.2" stroke-linejoin="round"/><path d="M1 21 H19 M10 12 V30 M3.7 14.7 L16.3 27.3 M3.7 27.3 L16.3 14.7" stroke="#3fa9bb" stroke-width="4.0"/><circle cx="10" cy="21" r="4.95" fill="#3fa9bb"/><circle cx="10" cy="21" r="2.5200000000000005" fill="#444444"/></svg>
<svg class="r" style="left:843px;top:373px;" width="16" height="28" viewBox="0 0 16 28"><path d="M1 1 H15 V27 L8 20 L1 27 Z" fill="#bdbdbd" stroke="#2b2b2b" stroke-width="1.8" stroke-linejoin="round"/></svg>
<svg class="r" style="left:873px;top:371px;" width="31" height="30" viewBox="0 0 31 30"><path d="M3 28 L30 28 L26 22 L8 22 Z" fill="#e0e0e0" stroke="#2b2b2b" stroke-width="1.4" stroke-linejoin="round"/><path d="M12 26 L25 5 V26 Z" fill="#3fa9bb" stroke="#2b2b2b" stroke-width="1.4" stroke-linejoin="round"/><path d="M14 24 L22 24 M16 27 L26 27" stroke="#2b2b2b" stroke-width="1.2"/></svg>
<svg class="r" style="left:912px;top:371px;" width="29" height="30" viewBox="0 0 29 30"><path d="M1 11 L7 6 V9 H12 V4 H9 L14 0 L19 4 H16 V13 H7 V16 Z" fill="#bdbdbd" stroke="#2b2b2b" stroke-width="1.2" stroke-linejoin="round"/><circle cx="19" cy="14" r="7.5" fill="none" stroke="#2b2b2b" stroke-width="6"/><circle cx="19" cy="14" r="7.5" fill="none" stroke="#3fa9bb" stroke-width="3"/><path d="M13 20 L5 28" stroke="#2b2b2b" stroke-width="6" stroke-linecap="round"/><path d="M13 20 L5 28" stroke="#3fa9bb" stroke-width="3" stroke-linecap="round"/></svg>
<svg class="r" style="left:951px;top:372px;" width="28" height="28" viewBox="0 0 28 28"><path d="M5 19 L21 3 A3.5 3.5 0 0 1 26 8 L10 24 Z" fill="#3fa9bb" stroke="#2b2b2b" stroke-width="1.8" stroke-linejoin="round"/><path d="M5 19 L10 24 L1 27 Z" fill="#e0e0e0" stroke="#2b2b2b" stroke-width="1.4" stroke-linejoin="round"/><path d="M2.5 25.5 L4 22 L6 24 Z" fill="#3fa9bb"/></svg>
<div class="r" style="left:1007px;top:368px;width:36px;height:36px;background:#5285a6;border-radius:3px;"></div>
<svg class="r" style="left:1013px;top:374px;" width="25" height="25" viewBox="0 0 25 25"><rect x="0" y="0" width="25" height="25" fill="#2b2b2b"/><rect x="2" y="2" width="21" height="21" fill="#2b2b2b" stroke="#bdbdbd" stroke-width="2.4"/><path d="M9 2 V23 M16 2 V23 M2 9 H23 M2 16 H23" stroke="#bdbdbd" stroke-width="2.2"/></svg>
<svg class="r" style="left:1048px;top:374px;" width="29" height="24" viewBox="0 0 29 24"><rect x="1" y="1" width="27" height="22" fill="#bdbdbd" stroke="#2b2b2b" stroke-width="1.6" stroke-linejoin="round"/><rect x="3" y="6" width="23" height="12" fill="#2b2b2b"/><path d="M3 3.5 H26 M3 20.5 H26" stroke="#2b2b2b" stroke-width="1.6" stroke-dasharray="2 2"/></svg>
<svg class="r" style="left:1086px;top:374px;" width="30" height="24" viewBox="0 0 30 24"><rect x="1" y="1" width="27" height="22" fill="#2b2b2b" stroke="#bdbdbd" stroke-width="2.2"/><circle cx="14.5" cy="12" r="6" fill="#3fa9bb"/></svg>
<svg class="r" style="left:1121px;top:368px;" width="36" height="36" viewBox="0 0 36 36"><rect x="0" y="0" width="35" height="35" fill="#3b3b3b" stroke="#2b2b2b" stroke-width="1.5"/><rect x="5" y="6" width="26" height="23" fill="#555"/><path d="M14 11 H22 L26 15 V21 L22 25 H14 L10 21 V15 Z" fill="#3e3e3e"/></svg>
<svg class="r" style="left:1162px;top:374px;" width="30" height="24" viewBox="0 0 30 24"><rect x="1" y="1" width="27" height="22" fill="#2b2b2b" stroke="#bdbdbd" stroke-width="2.2"/><path d="M11 5 H18 M11 12 H18 M11 19 H18" stroke="#3fa9bb" stroke-width="2"/><path d="M5 9 V15 M24 9 V15" stroke="#3fa9bb" stroke-width="2"/></svg>
<svg class="r" style="left:1200px;top:374px;" width="30" height="24" viewBox="0 0 30 24"><rect x="1" y="1" width="27" height="22" fill="#2b2b2b" stroke="#bdbdbd" stroke-width="2.2"/><path d="M6 20 L12 11 L17 20 Z" fill="#3fa9bb"/><circle cx="19" cy="9" r="4" fill="#3fa9bb"/></svg>
<svg class="r" style="left:1238px;top:374px;" width="30" height="24" viewBox="0 0 30 24"><rect x="1" y="1" width="27" height="22" fill="#2b2b2b" stroke="#bdbdbd" stroke-width="2.2"/><text x="14.5" y="20" font-family="Liberation Serif" font-size="19" fill="#3fa9bb" text-anchor="middle">T</text></svg>
<svg class="r" style="left:487px;top:408px;overflow:hidden;" width="804" height="891" viewBox="0 0 804 891"><rect x="0" y="0" width="804" height="891" fill="#6b6b6b"/><path d="M0.0,0.0 L804.0,0.0 L804.0,348.0 Q403.0,381.0 0.0,408.0 Z" fill="#7b7b7b"/><path d="M0.0,0.0 L804.0,0.0 L804.0,324.0 Q403.0,352.0 0.0,379.0 Z" fill="#8b8b8b"/><path d="M0.0,0.0 L804.0,0.0 L804.0,272.0 Q403.0,300.0 0.0,316.0 Z" fill="#939393"/><path d="M0.0,0.0 L804.0,0.0 L804.0,187.0 Q403.0,171.0 0.0,165.5 Z" fill="#878787"/><path d="M0.0,191.0 L153.0,192.0 C233.0,194.0 295.0,204.0 295.0,216.0 C295.0,232.0 163.0,252.0 0.0,256.0 Z" fill="#a3a3a3"/><path d="M0.0,83.1 L804.0,89.1 M0.0,165.2 L804.0,155.2 M0.0,200.9 L804.0,183.1 M0.0,234.9 L804.0,210.6 M0.0,267.0 L804.0,236.6 M0.0,297.4 L804.0,260.6 M0.0,325.9 L804.0,284.1 M0.0,350.9 L804.0,304.5 M0.0,374.1 L804.0,323.1 M0.0,393.8 L804.0,337.7 M0.0,419.5 L804.0,359.9 M0.0,472.4 L804.0,402.0 M289.5,0.0 C293.0,92.0 299.0,192.0 309.0,283.0 C316.0,332.0 325.0,367.0 343.0,407.0 L397.0,517.0 L565.6,891.0" fill="none" stroke="#0b0b7a" stroke-width="1.3"/><defs><pattern id="wire" width="3" height="3" patternUnits="userSpaceOnUse"><rect width="3" height="3" fill="#0a0a70"/><rect x="1" y="1" width="1.25" height="1.25" fill="#a09a88"/></pattern><clipPath id="catclip"><path d="M429.3,402.7 C432.4,401.8 430.9,403.6 431.0,406.3 C431.1,409.0 430.0,414.2 430.0,418.8 C430.0,423.4 431.7,429.0 431.0,434.0 C430.3,439.0 426.7,444.1 425.7,449.0 C424.7,453.9 425.6,455.1 424.8,463.4 C424.0,471.7 420.1,491.9 421.0,499.0 C421.9,506.1 428.4,504.2 430.0,506.3 C431.6,508.4 432.1,509.2 430.6,511.6 C429.1,514.0 427.2,519.4 421.2,520.6 C415.2,521.8 405.6,519.4 394.4,518.8 C383.2,518.2 362.4,518.0 354.2,517.0 C346.1,516.0 348.6,515.8 345.3,512.5 C342.0,509.2 335.3,501.9 334.6,497.4 C333.9,492.9 339.0,491.4 340.9,485.8 C342.8,480.1 343.2,469.5 346.2,463.4 C349.2,457.3 355.1,452.3 358.7,449.0 C362.3,445.7 362.8,445.6 367.6,443.8 C372.4,442.0 382.8,441.1 387.3,438.4 C391.8,435.7 393.2,432.2 394.4,427.7 C395.6,423.2 393.6,414.5 394.4,411.6 C395.1,408.7 397.4,410.3 398.9,410.3 C400.4,410.3 401.2,411.3 403.4,411.6 C405.6,411.9 408.0,413.5 412.3,412.0 C416.6,410.5 426.2,403.7 429.3,402.7 Z"/></clipPath></defs><path d="M429.3,402.7 C432.4,401.8 430.9,403.6 431.0,406.3 C431.1,409.0 430.0,414.2 430.0,418.8 C430.0,423.4 431.7,429.0 431.0,434.0 C430.3,439.0 426.7,444.1 425.7,449.0 C424.7,453.9 425.6,455.1 424.8,463.4 C424.0,471.7 420.1,491.9 421.0,499.0 C421.9,506.1 428.4,504.2 430.0,506.3 C431.6,508.4 432.1,509.2 430.6,511.6 C429.1,514.0 427.2,519.4 421.2,520.6 C415.2,521.8 405.6,519.4 394.4,518.8 C383.2,518.2 362.4,518.0 354.2,517.0 C346.1,516.0 348.6,515.8 345.3,512.5 C342.0,509.2 335.3,501.9 334.6,497.4 C333.9,492.9 339.0,491.4 340.9,485.8 C342.8,480.1 343.2,469.5 346.2,463.4 C349.2,457.3 355.1,452.3 358.7,449.0 C362.3,445.7 362.8,445.6 367.6,443.8 C372.4,442.0 382.8,441.1 387.3,438.4 C391.8,435.7 393.2,432.2 394.4,427.7 C395.6,423.2 393.6,414.5 394.4,411.6 C395.1,408.7 397.4,410.3 398.9,410.3 C400.4,410.3 401.2,411.3 403.4,411.6 C405.6,411.9 408.0,413.5 412.3,412.0 C416.6,410.5 426.2,403.7 429.3,402.7 Z" fill="url(#wire)"/><g clip-path="url(#catclip)" fill="none" stroke="#0a0a70"><path d="M429.3,402.7 C432.4,401.8 430.9,403.6 431.0,406.3 C431.1,409.0 430.0,414.2 430.0,418.8 C430.0,423.4 431.7,429.0 431.0,434.0 C430.3,439.0 426.7,444.1 425.7,449.0 C424.7,453.9 425.6,455.1 424.8,463.4 C424.0,471.7 420.1,491.9 421.0,499.0 C421.9,506.1 428.4,504.2 430.0,506.3 C431.6,508.4 432.1,509.2 430.6,511.6 C429.1,514.0 427.2,519.4 421.2,520.6 C415.2,521.8 405.6,519.4 394.4,518.8 C383.2,518.2 362.4,518.0 354.2,517.0 C346.1,516.0 348.6,515.8 345.3,512.5 C342.0,509.2 335.3,501.9 334.6,497.4 C333.9,492.9 339.0,491.4 340.9,485.8 C342.8,480.1 343.2,469.5 346.2,463.4 C349.2,457.3 355.1,452.3 358.7,449.0 C362.3,445.7 362.8,445.6 367.6,443.8 C372.4,442.0 382.8,441.1 387.3,438.4 C391.8,435.7 393.2,432.2 394.4,427.7 C395.6,423.2 393.6,414.5 394.4,411.6 C395.1,408.7 397.4,410.3 398.9,410.3 C400.4,410.3 401.2,411.3 403.4,411.6 C405.6,411.9 408.0,413.5 412.3,412.0 C416.6,410.5 426.2,403.7 429.3,402.7 Z" stroke-width="6"/><path d="M389.0,442.0 C385.0,472.0 388.0,497.0 393.0,520.0" stroke-width="5"/><path d="M418.0,447.0 C413.0,472.0 418.0,497.0 425.0,517.0" stroke-width="4"/><path d="M348.0,487.0 C363.0,472.0 378.0,477.0 385.0,487.0" stroke-width="2.5"/><path d="M397.0,414.0 L393.0,442.0" stroke-width="4"/><path d="M361.0,510.0 L419.0,516.0" stroke-width="5"/></g><path d="M390.0,506.0 h10 v16 h-10 Z M390.0,511.0 h10 M390.0,516.0 h10 M392.0,522.0 l2 7 M399.0,522.0 l2 7" fill="none" stroke="#f4f4f4" stroke-width="1.3"/><path d="M50.0,816.0 L50.0,841.0" stroke="#22cc22" stroke-width="1"/><path d="M50.0,841.0 L79.0,839.0" stroke="#dd2222" stroke-width="1"/><path d="M50.0,841.0 L59.0,848.0" stroke="#2222ee" stroke-width="1"/></svg>
<div class="t" style="left:532.00px;top:1204.07px;font-size:20px;line-height:20px;color:#22ee22;font-weight:bold;">y</div>
<div class="t" style="left:562.00px;top:1227.07px;font-size:20px;line-height:20px;color:#ee2020;font-weight:bold;">x</div>
<div class="t" style="left:540.00px;top:1245.76px;font-size:18px;line-height:18px;color:#2030ff;font-weight:bold;">z</div>
<div class="t" style="left:846.50px;top:1261.67px;font-size:20px;line-height:20px;color:#f0f0f0;font-weight:bold;letter-spacing:-0.193px;">persp</div>
<div class="r" style="left:1299px;top:324px;width:806px;height:976px;border:1px solid #9a9a9a;"></div>
<div class="t" style="left:1317.30px;top:335.07px;font-size:22px;line-height:22px;color:#c4c4c4;">View</div>
<div class="t" style="left:1394.40px;top:335.07px;font-size:22px;line-height:22px;color:#c4c4c4;">Shading</div>
<div class="t" style="left:1503.70px;top:335.07px;font-size:22px;line-height:22px;color:#c4c4c4;">Lighting</div>
<div class="t" style="left:1613.00px;top:335.07px;font-size:22px;line-height:22px;color:#c4c4c4;">Show</div>
<div class="t" style="left:1696.90px;top:335.07px;font-size:22px;line-height:22px;color:#c4c4c4;">Renderer</div>
<div class="t" style="left:1815.20px;top:335.07px;font-size:22px;line-height:22px;color:#c4c4c4;">Panels</div>
<div class="r" style="left:1309px;top:370px;width:2px;height:32px;background:#8a8a8a;"></div>
<div class="r" style="left:1307px;top:378.0px;width:6px;height:16.0px;background:#8a8a8a;"></div>
<div class="r" style="left:1519px;top:370px;width:2px;height:32px;background:#8a8a8a;"></div>
<div class="r" style="left:1517px;top:378.0px;width:6px;height:16.0px;background:#8a8a8a;"></div>
<div class="r" style="left:1807px;top:370px;width:2px;height:32px;background:#8a8a8a;"></div>
<div class="r" style="left:1805px;top:378.0px;width:6px;height:16.0px;background:#8a8a8a;"></div>
<div class="r" style="left:2095px;top:370px;width:2px;height:32px;background:#8a8a8a;"></div>
<div class="r" style="left:2093px;top:378.0px;width:6px;height:16.0px;background:#8a8a8a;"></div>
<svg class="r" style="left:1323px;top:370px;" width="34" height="33" viewBox="0 0 34 33"><path d="M0 3 L5 1 V27 L0 29 Z" fill="#7fc6e4"/><rect x="5" y="0" width="24" height="26" fill="#36a3cf"/><rect x="3" y="25" width="28" height="7" fill="#336a82"/><path d="M29 3 H32 V32 H29 Z" fill="#336a82"/><text x="17" y="20" font-family="Liberation Sans" font-weight="bold" font-size="17" fill="#fff" text-anchor="middle">A</text></svg>
<svg class="r" style="left:1362px;top:371px;" width="30" height="30" viewBox="0 0 30 30"><rect x="7" y="7" width="16" height="16" fill="#3fa9bb" stroke="#2b2b2b" stroke-width="2" stroke-linejoin="round"/><path d="M1 5 H29 M1 24 H29 M6 0 V29 M24 0 V29" stroke="#2b2b2b" stroke-width="3.5"/><path d="M1 5 H29 M1 24 H29 M6 0 V29 M24 0 V29" stroke="#e8e8e8" stroke-width="1.6"/></svg>
<svg class="r" style="left:1400px;top:373px;" width="30" height="28" viewBox="0 0 30 28"><rect x="1" y="1" width="28" height="26" fill="#555"/><rect x="1" y="9" width="20" height="17" fill="none" stroke="#3a3a3a" stroke-width="1.6" stroke-dasharray="2 2"/></svg>
<svg class="r" style="left:1440px;top:373px;" width="26" height="26" viewBox="0 0 26 26"><circle cx="13" cy="13" r="12.5" fill="#5a5a5a"/><path d="M1 18 A12.5 12.5 0 0 1 21 4 Z" fill="#4f5560"/><path d="M1 18 L25 9" stroke="#444" stroke-width="1"/></svg>
<svg class="r" style="left:1475px;top:371px;" width="32" height="30" viewBox="0 0 32 30"><rect x="9" y="1" width="22" height="18" fill="#4a5a4a" stroke="#3a3a3a" stroke-width="1.2"/><rect x="5" y="5" width="22" height="18" fill="#5a4a4a" stroke="#3a3a3a" stroke-width="1.2"/><rect x="1" y="10" width="24" height="19" fill="#4a5a66" stroke="#3a3a3a" stroke-width="1.4"/><path d="M4 27 L10 19 L14 22 L19 16 L22 27 Z" fill="#667"/></svg>
<svg class="r" style="left:1535px;top:377px;" width="32" height="20" viewBox="0 0 32 20"><rect x="1" y="3" width="20" height="15" rx="1" fill="#bdbdbd" stroke="#2b2b2b" stroke-width="1.8" stroke-linejoin="round"/><path d="M22 10.5 L30 2 V19 Z" fill="#bdbdbd" stroke="#2b2b2b" stroke-width="1.8" stroke-linejoin="round"/></svg>
<svg class="r" style="left:1573px;top:370px;" width="31" height="31" viewBox="0 0 31 31"><rect x="1" y="7" width="19" height="15" fill="#bdbdbd" stroke="#2b2b2b" stroke-width="1.8" stroke-linejoin="round"/><path d="M21 13 L30 4 V22 Z" fill="#bdbdbd" stroke="#2b2b2b" stroke-width="1.8" stroke-linejoin="round"/><path d="M6 19 V15 A5 5 0 0 1 16 15 V19" fill="none" stroke="#2b2b2b" stroke-width="5"/><path d="M6 19 V15 A5 5 0 0 1 16 15 V19" fill="none" stroke="#3fa9bb" stroke-width="2.5"/><rect x="3" y="18" width="16" height="12" fill="#3fa9bb" stroke="#2b2b2b" stroke-width="1.6" stroke-linejoin="round"/><rect x="10" y="22" width="2" height="5" fill="#2b2b2b"/></svg>
<svg class="r" style="left:1612px;top:370px;" width="31" height="31" viewBox="0 0 31 31"><rect x="1" y="7" width="19" height="15" fill="#bdbdbd" stroke="#2b2b2b" stroke-width="1.8" stroke-linejoin="round"/><path d="M21 13 L30 4 V22 Z" fill="#bdbdbd" stroke="#2b2b2b" stroke-width="1.8" stroke-linejoin="round"/><circle cx="10" cy="21" r="7.2" fill="#3fa9bb" stroke="#2b2b2b" stroke-width="1.2" stroke-linejoin="round"/><path d="M1 21 H19 M10 12 V30 M3.7 14.7 L16.3 27.3 M3.7 27.3 L16.3 14.7" stroke="#3fa9bb" stroke-width="4.0"/><circle cx="10" cy="21" r="4.95" fill="#3fa9bb"/><circle cx="10" cy="21" r="2.5200000000000005" fill="#444444"/></svg>
<svg class="r" style="left:1657px;top:373px;" width="16" height="28" viewBox="0 0 16 28"><path d="M1 1 H15 V27 L8 20 L1 27 Z" fill="#bdbdbd" stroke="#2b2b2b" stroke-width="1.8" stroke-linejoin="round"/></svg>
<svg class="r" style="left:1687px;top:371px;" width="31" height="30" viewBox="0 0 31 30"><path d="M3 28 L30 28 L26 22 L8 22 Z" fill="#e0e0e0" stroke="#2b2b2b" stroke-width="1.4" stroke-linejoin="round"/><path d="M12 26 L25 5 V26 Z" fill="#3fa9bb" stroke="#2b2b2b" stroke-width="1.4" stroke-linejoin="round"/><path d="M14 24 L22 24 M16 27 L26 27" stroke="#2b2b2b" stroke-width="1.2"/></svg>
<svg class="r" style="left:1726px;top:371px;" width="29" height="30" viewBox="0 0 29 30"><path d="M1 11 L7 6 V9 H12 V4 H9 L14 0 L19 4 H16 V13 H7 V16 Z" fill="#bdbdbd" stroke="#2b2b2b" stroke-width="1.2" stroke-linejoin="round"/><circle cx="19" cy="14" r="7.5" fill="none" stroke="#2b2b2b" stroke-width="6"/><circle cx="19" cy="14" r="7.5" fill="none" stroke="#3fa9bb" stroke-width="3"/><path d="M13 20 L5 28" stroke="#2b2b2b" stroke-width="6" stroke-linecap="round"/><path d="M13 20 L5 28" stroke="#3fa9bb" stroke-width="3" stroke-linecap="round"/></svg>
<svg class="r" style="left:1765px;top:372px;" width="28" height="28" viewBox="0 0 28 28"><path d="M5 19 L21 3 A3.5 3.5 0 0 1 26 8 L10 24 Z" fill="#3fa9bb" stroke="#2b2b2b" stroke-width="1.8" stroke-linejoin="round"/><path d="M5 19 L10 24 L1 27 Z" fill="#e0e0e0" stroke="#2b2b2b" stroke-width="1.4" stroke-linejoin="round"/><path d="M2.5 25.5 L4 22 L6 24 Z" fill="#3fa9bb"/></svg>
<div class="r" style="left:1821px;top:368px;width:36px;height:36px;background:#5285a6;border-radius:3px;"></div>
<svg class="r" style="left:1827px;top:374px;" width="25" height="25" viewBox="0 0 25 25"><rect x="0" y="0" width="25" height="25" fill="#2b2b2b"/><rect x="2" y="2" width="21" height="21" fill="#2b2b2b" stroke="#bdbdbd" stroke-width="2.4"/><path d="M9 2 V23 M16 2 V23 M2 9 H23 M2 16 H23" stroke="#bdbdbd" stroke-width="2.2"/></svg>
<svg class="r" style="left:1862px;top:374px;" width="29" height="24" viewBox="0 0 29 24"><rect x="1" y="1" width="27" height="22" fill="#bdbdbd" stroke="#2b2b2b" stroke-width="1.6" stroke-linejoin="round"/><rect x="3" y="6" width="23" height="12" fill="#2b2b2b"/><path d="M3 3.5 H26 M3 20.5 H26" stroke="#2b2b2b" stroke-width="1.6" stroke-dasharray="2 2"/></svg>
<svg class="r" style="left:1900px;top:374px;" width="30" height="24" viewBox="0 0 30 24"><rect x="1" y="1" width="27" height="22" fill="#2b2b2b" stroke="#bdbdbd" stroke-width="2.2"/><circle cx="14.5" cy="12" r="6" fill="#3fa9bb"/></svg>
<svg class="r" style="left:1935px;top:368px;" width="36" height="36" viewBox="0 0 36 36"><rect x="0" y="0" width="35" height="35" fill="#3b3b3b" stroke="#2b2b2b" stroke-width="1.5"/><rect x="5" y="6" width="26" height="23" fill="#555"/><path d="M14 11 H22 L26 15 V21 L22 25 H14 L10 21 V15 Z" fill="#3e3e3e"/></svg>
<svg class="r" style="left:1976px;top:374px;" width="30" height="24" viewBox="0 0 30 24"><rect x="1" y="1" width="27" height="22" fill="#2b2b2b" stroke="#bdbdbd" stroke-width="2.2"/><path d="M11 5 H18 M11 12 H18 M11 19 H18" stroke="#3fa9bb" stroke-width="2"/><path d="M5 9 V15 M24 9 V15" stroke="#3fa9bb" stroke-width="2"/></svg>
<svg class="r" style="left:2014px;top:374px;" width="30" height="24" viewBox="0 0 30 24"><rect x="1" y="1" width="27" height="22" fill="#2b2b2b" stroke="#bdbdbd" stroke-width="2.2"/><path d="M6 20 L12 11 L17 20 Z" fill="#3fa9bb"/><circle cx="19" cy="9" r="4" fill="#3fa9bb"/></svg>
<svg class="r" style="left:2052px;top:374px;" width="30" height="24" viewBox="0 0 30 24"><rect x="1" y="1" width="27" height="22" fill="#2b2b2b" stroke="#bdbdbd" stroke-width="2.2"/><text x="14.5" y="20" font-family="Liberation Serif" font-size="19" fill="#3fa9bb" text-anchor="middle">T</text></svg>
<svg class="r" style="left:1301px;top:409px;overflow:hidden;" width="804" height="891" viewBox="0 0 804 891"><rect x="0" y="0" width="804" height="891" fill="#5b5b5b"/><path d="M35.5,0 V891 M97.5,0 V891 M160.5,0 V891 M222.5,0 V891 M284.5,0 V891 M347.5,0 V891 M409.5,0 V891 M471.5,0 V891 M534.5,0 V891 M658.5,0 V891 M721.5,0 V891 M783.5,0 V891 M0,63.5 H804 M0,126.5 H804 M0,188.5 H804 M0,250.5 H804 M0,313.5 H804 M0,375.5 H804 M0,437.5 H804 M0,562.5 H804 M0,624.5 H804 M0,686.5 H804 M0,749.5 H804 M0,811.5 H804 M0,873.5 H804 " stroke="#444444" stroke-width="1" fill="none" shape-rendering="crispEdges"/><path d="M596.5,0 V891 M0,499.5 H804" stroke="#3c3c3c" stroke-width="2" fill="none"/><path d="M622.0,499.6 H804" stroke="#0b0b7a" stroke-width="1.5"/><rect x="640" y="66" width="98" height="97" fill="#d0d0d0" fill-opacity="0.5" stroke="#8a8a8a" stroke-width="1"/><rect x="641" y="67" width="96" height="48" fill="#dddddd" fill-opacity="0.12"/><defs><clipPath id="sclip"><path d="M526.0,93.8 C528.3,93.0 531.2,101.3 535.0,104.0 C538.8,106.7 544.4,111.5 548.7,110.0 C553.0,108.5 557.5,98.0 561.0,95.0 C564.5,92.0 566.5,91.4 570.0,92.0 C573.5,92.6 578.8,93.4 582.2,98.8 C585.6,104.2 587.5,117.6 590.2,124.6 C592.9,131.6 593.4,132.6 598.3,140.6 C603.2,148.6 612.6,161.2 619.7,172.8 C626.8,184.4 635.7,199.6 641.0,210.3 C646.3,221.0 648.2,229.9 651.8,237.0 C655.4,244.1 658.0,246.8 662.5,253.0 C667.0,259.2 673.2,264.7 678.6,274.5 C684.0,284.3 691.1,302.6 694.7,312.0 C698.3,321.4 696.5,324.1 700.0,330.8 C703.5,337.5 711.5,344.2 716.0,352.2 C720.5,360.2 723.7,369.6 726.8,379.0 C729.9,388.4 732.8,398.1 734.8,408.4 C736.8,418.7 737.2,433.2 738.9,440.6 C740.6,448.0 742.0,449.6 745.0,453.0 C748.0,456.4 754.7,458.2 757.0,461.0 C759.3,463.8 762.0,467.7 759.0,470.0 C756.0,472.3 771.2,474.2 739.0,475.0 C706.8,475.8 603.7,475.2 566.0,475.0 C528.3,474.8 521.9,476.1 512.6,473.5 C503.2,470.9 509.7,464.7 509.9,459.3 C510.1,453.9 511.5,446.7 514.0,441.0 C516.5,435.3 521.7,429.0 525.0,425.0 C528.3,421.0 532.3,422.4 534.0,417.0 C535.7,411.6 535.7,405.4 535.0,392.4 C534.3,379.4 531.7,354.0 530.0,338.8 C528.3,323.6 525.7,314.7 524.6,301.3 C523.5,287.9 523.1,268.3 523.3,258.5 C523.5,248.7 525.0,246.8 526.0,242.4 C527.0,238.0 531.2,234.7 529.0,232.0 C526.8,229.3 518.0,229.0 512.6,226.0 C507.2,223.0 500.1,218.0 496.5,214.0 C492.9,210.0 491.2,206.4 491.0,202.2 C490.8,198.0 493.6,195.9 495.0,189.0 C496.4,182.1 497.2,169.3 499.2,161.0 C501.2,152.7 504.2,145.2 507.0,139.0 C509.8,132.8 513.7,129.0 516.0,124.0 C518.3,119.0 519.3,114.0 521.0,109.0 C522.7,104.0 523.7,94.6 526.0,93.8 Z"/></clipPath><filter id="blur6" x="-50%" y="-50%" width="200%" height="200%"><feGaussianBlur stdDeviation="6"/></filter><filter id="blur3" x="-50%" y="-50%" width="200%" height="200%"><feGaussianBlur stdDeviation="2.5"/></filter><filter id="noise" x="0" y="0" width="100%" height="100%"><feTurbulence type="fractalNoise" baseFrequency="0.45" numOctaves="2" seed="7"/><feColorMatrix values="0 0 0 0 0.15  0 0 0 0 0.13  0 0 0 0 0.1  -2.6 0 0 0 1.5"/></filter><filter id="noise2" x="0" y="0" width="100%" height="100%"><feTurbulence type="fractalNoise" baseFrequency="0.6" numOctaves="1" seed="11"/><feColorMatrix values="0 0 0 0 0.8  0 0 0 0 0.75  0 0 0 0 0.65  2.4 0 0 0 -1.6"/></filter></defs><g clip-path="url(#sclip)"><rect x="479" y="81" width="290" height="400" fill="#6a5f4e"/><path d="M639.0,201.0 L769.0,471.0 L629.0,481.0 L614.0,351.0 Z" fill="#3e372c" filter="url(#blur6)"/><path d="M579.0,111.0 L659.0,251.0 L629.0,291.0 L594.0,191.0 Z" fill="#4a4236" filter="url(#blur6)"/><ellipse cx="555" cy="156" rx="30" ry="26" fill="#978a74" filter="url(#blur6)"/><ellipse cx="554" cy="281" rx="18" ry="36" fill="#8d806b" filter="url(#blur6)"/><ellipse cx="601" cy="351" rx="12" ry="50" fill="#8a7d68" filter="url(#blur6)"/><ellipse cx="689" cy="401" rx="28" ry="45" fill="#6e6352" filter="url(#blur6)"/><ellipse cx="659" cy="466" rx="70" ry="8" fill="#8e826c" filter="url(#blur3)"/><path d="M499.0,213.0 C529.0,231.0 564.0,236.0 589.0,211.0 C599.0,191.0 599.0,171.0 594.0,151.0" fill="none" stroke="#1a1610" stroke-width="13" filter="url(#blur3)"/><path d="M528.0,303.0 C544.0,351.0 559.0,391.0 574.0,423.0" fill="none" stroke="#221d16" stroke-width="5" filter="url(#blur3)"/><path d="M651.0,246.0 C644.0,311.0 629.0,381.0 617.0,443.0" fill="none" stroke="#1a160f" stroke-width="7" filter="url(#blur3)"/><path d="M679.0,331.0 C709.0,361.0 729.0,401.0 731.0,441.0" fill="none" stroke="#2a241b" stroke-width="5" filter="url(#blur3)"/><path d="M507.0,181.0 L521.0,177.0" stroke="#1e1a14" stroke-width="4"/><path d="M515.0,441.0 C529.0,436.0 539.0,443.0 544.0,461.0 M559.0,469.0 C561.0,451.0 569.0,441.0 579.0,441.0" fill="none" stroke="#2a241b" stroke-width="2.5"/><rect x="479" y="81" width="290" height="400" filter="url(#noise)"/><rect x="479" y="81" width="290" height="400" filter="url(#noise2)"/></g><path d="M526.0,93.8 C528.3,93.0 531.2,101.3 535.0,104.0 C538.8,106.7 544.4,111.5 548.7,110.0 C553.0,108.5 557.5,98.0 561.0,95.0 C564.5,92.0 566.5,91.4 570.0,92.0 C573.5,92.6 578.8,93.4 582.2,98.8 C585.6,104.2 587.5,117.6 590.2,124.6 C592.9,131.6 593.4,132.6 598.3,140.6 C603.2,148.6 612.6,161.2 619.7,172.8 C626.8,184.4 635.7,199.6 641.0,210.3 C646.3,221.0 648.2,229.9 651.8,237.0 C655.4,244.1 658.0,246.8 662.5,253.0 C667.0,259.2 673.2,264.7 678.6,274.5 C684.0,284.3 691.1,302.6 694.7,312.0 C698.3,321.4 696.5,324.1 700.0,330.8 C703.5,337.5 711.5,344.2 716.0,352.2 C720.5,360.2 723.7,369.6 726.8,379.0 C729.9,388.4 732.8,398.1 734.8,408.4 C736.8,418.7 737.2,433.2 738.9,440.6 C740.6,448.0 742.0,449.6 745.0,453.0 C748.0,456.4 754.7,458.2 757.0,461.0 C759.3,463.8 762.0,467.7 759.0,470.0 C756.0,472.3 771.2,474.2 739.0,475.0 C706.8,475.8 603.7,475.2 566.0,475.0 C528.3,474.8 521.9,476.1 512.6,473.5 C503.2,470.9 509.7,464.7 509.9,459.3 C510.1,453.9 511.5,446.7 514.0,441.0 C516.5,435.3 521.7,429.0 525.0,425.0 C528.3,421.0 532.3,422.4 534.0,417.0 C535.7,411.6 535.7,405.4 535.0,392.4 C534.3,379.4 531.7,354.0 530.0,338.8 C528.3,323.6 525.7,314.7 524.6,301.3 C523.5,287.9 523.1,268.3 523.3,258.5 C523.5,248.7 525.0,246.8 526.0,242.4 C527.0,238.0 531.2,234.7 529.0,232.0 C526.8,229.3 518.0,229.0 512.6,226.0 C507.2,223.0 500.1,218.0 496.5,214.0 C492.9,210.0 491.2,206.4 491.0,202.2 C490.8,198.0 493.6,195.9 495.0,189.0 C496.4,182.1 497.2,169.3 499.2,161.0 C501.2,152.7 504.2,145.2 507.0,139.0 C509.8,132.8 513.7,129.0 516.0,124.0 C518.3,119.0 519.3,114.0 521.0,109.0 C522.7,104.0 523.7,94.6 526.0,93.8 Z" fill="none" stroke="#15120d" stroke-width="1.5"/><path d="M513.0,461.0 C489.0,461.0 478.0,476.0 478.0,490.0 C478.0,506.0 494.0,520.0 516.0,520.0 M516.6,475.0 H596.5 V520 H516.5999999999999 Z M535.0,482.0 H580.4000000000001 V520 M535.0,482.0 L522.0,520.0 M596.5,486.0 H624.5999999999999 V513.3 H596.5 M604.0,486.0 V513.3 M596.5,499.0 H616" fill="none" stroke="#f0f0f0" stroke-width="1.2"/><path d="M50.5,813.0 V840" stroke="#22cc22" stroke-width="1.2"/><path d="M22.0,840.0 H50.5" stroke="#2222ee" stroke-width="1.2"/></svg>
<div class="t" style="left:1955.60px;top:515.01px;font-size:17px;line-height:17px;color:#555555;font-weight:bold;letter-spacing:3.623px;">RIGHT</div>
<div class="t" style="left:1345.00px;top:1199.07px;font-size:20px;line-height:20px;color:#22ee22;font-weight:bold;">y</div>
<div class="t" style="left:1314.00px;top:1231.07px;font-size:20px;line-height:20px;color:#2030ff;font-weight:bold;">z</div>
<div class="t" style="left:1346.00px;top:1231.07px;font-size:20px;line-height:20px;color:#ee2020;font-weight:bold;">x</div>
<div class="t" style="left:1654.80px;top:1261.67px;font-size:20px;line-height:20px;color:#f0f0f0;font-weight:bold;letter-spacing:0.060px;">side -X</div>
<svg class="r" style="left:1708px;top:911px;" width="18" height="27" viewBox="0 0 18 27"><path d="M1 1 L1 21 L6 16 L10 25 L13 24 L9 15 L16 15 Z" fill="#fff" stroke="#000" stroke-width="1.2"/></svg>
<div class="r" style="left:2110px;top:321px;width:4px;height:984px;background:#2e2e2e;"></div>
<svg class="r" style="left:1295px;top:648px;" width="3" height="328" viewBox="0 0 3 328"><rect x="0" y="0" width="2" height="2" fill="#8c8c8c"/><rect x="0" y="5" width="2" height="2" fill="#8c8c8c"/><rect x="0" y="10" width="2" height="2" fill="#8c8c8c"/><rect x="0" y="15" width="2" height="2" fill="#8c8c8c"/><rect x="0" y="20" width="2" height="2" fill="#8c8c8c"/><rect x="0" y="25" width="2" height="2" fill="#8c8c8c"/><rect x="0" y="30" width="2" height="2" fill="#8c8c8c"/><rect x="0" y="35" width="2" height="2" fill="#8c8c8c"/><rect x="0" y="40" width="2" height="2" fill="#8c8c8c"/><rect x="0" y="45" width="2" height="2" fill="#8c8c8c"/><rect x="0" y="50" width="2" height="2" fill="#8c8c8c"/><rect x="0" y="55" width="2" height="2" fill="#8c8c8c"/><rect x="0" y="60" width="2" height="2" fill="#8c8c8c"/><rect x="0" y="65" width="2" height="2" fill="#8c8c8c"/><rect x="0" y="70" width="2" height="2" fill="#8c8c8c"/><rect x="0" y="75" width="2" height="2" fill="#8c8c8c"/><rect x="0" y="80" width="2" height="2" fill="#8c8c8c"/><rect x="0" y="85" width="2" height="2" fill="#8c8c8c"/><rect x="0" y="90" width="2" height="2" fill="#8c8c8c"/><rect x="0" y="95" width="2" height="2" fill="#8c8c8c"/><rect x="0" y="100" width="2" height="2" fill="#8c8c8c"/><rect x="0" y="105" width="2" height="2" fill="#8c8c8c"/><rect x="0" y="110" width="2" height="2" fill="#8c8c8c"/><rect x="0" y="115" width="2" height="2" fill="#8c8c8c"/><rect x="0" y="120" width="2" height="2" fill="#8c8c8c"/><rect x="0" y="125" width="2" height="2" fill="#8c8c8c"/><rect x="0" y="130" width="2" height="2" fill="#8c8c8c"/><rect x="0" y="135" width="2" height="2" fill="#8c8c8c"/><rect x="0" y="140" width="2" height="2" fill="#8c8c8c"/><rect x="0" y="145" width="2" height="2" fill="#8c8c8c"/><rect x="0" y="150" width="2" height="2" fill="#8c8c8c"/><rect x="0" y="155" width="2" height="2" fill="#8c8c8c"/><rect x="0" y="160" width="2" height="2" fill="#8c8c8c"/><rect x="0" y="165" width="2" height="2" fill="#8c8c8c"/><rect x="0" y="170" width="2" height="2" fill="#8c8c8c"/><rect x="0" y="175" width="2" height="2" fill="#8c8c8c"/><rect x="0" y="180" width="2" height="2" fill="#8c8c8c"/><rect x="0" y="185" width="2" height="2" fill="#8c8c8c"/><rect x="0" y="190" width="2" height="2" fill="#8c8c8c"/><rect x="0" y="195" width="2" height="2" fill="#8c8c8c"/><rect x="0" y="200" width="2" height="2" fill="#8c8c8c"/><rect x="0" y="205" width="2" height="2" fill="#8c8c8c"/><rect x="0" y="210" width="2" height="2" fill="#8c8c8c"/><rect x="0" y="215" width="2" height="2" fill="#8c8c8c"/><rect x="0" y="220" width="2" height="2" fill="#8c8c8c"/><rect x="0" y="225" width="2" height="2" fill="#8c8c8c"/><rect x="0" y="230" width="2" height="2" fill="#8c8c8c"/><rect x="0" y="235" width="2" height="2" fill="#8c8c8c"/><rect x="0" y="240" width="2" height="2" fill="#8c8c8c"/><rect x="0" y="245" width="2" height="2" fill="#8c8c8c"/><rect x="0" y="250" width="2" height="2" fill="#8c8c8c"/><rect x="0" y="255" width="2" height="2" fill="#8c8c8c"/><rect x="0" y="260" width="2" height="2" fill="#8c8c8c"/><rect x="0" y="265" width="2" height="2" fill="#8c8c8c"/><rect x="0" y="270" width="2" height="2" fill="#8c8c8c"/><rect x="0" y="275" width="2" height="2" fill="#8c8c8c"/><rect x="0" y="280" width="2" height="2" fill="#8c8c8c"/><rect x="0" y="285" width="2" height="2" fill="#8c8c8c"/><rect x="0" y="290" width="2" height="2" fill="#8c8c8c"/><rect x="0" y="295" width="2" height="2" fill="#8c8c8c"/><rect x="0" y="300" width="2" height="2" fill="#8c8c8c"/><rect x="0" y="305" width="2" height="2" fill="#8c8c8c"/><rect x="0" y="310" width="2" height="2" fill="#8c8c8c"/><rect x="0" y="315" width="2" height="2" fill="#8c8c8c"/><rect x="0" y="320" width="2" height="2" fill="#8c8c8c"/><rect x="0" y="325" width="2" height="2" fill="#8c8c8c"/></svg>
<div class="r" style="left:2114px;top:321px;width:463px;height:984px;overflow:hidden;">
<div class="t" style="left:21.70px;top:29.27px;font-size:22px;line-height:22px;color:#c4c4c4;">List</div>
<div class="t" style="left:83.60px;top:29.27px;font-size:22px;line-height:22px;color:#c4c4c4;">Selected</div>
<div class="t" style="left:196.70px;top:29.27px;font-size:22px;line-height:22px;color:#c4c4c4;">Focus</div>
<div class="t" style="left:282.60px;top:29.27px;font-size:22px;line-height:22px;color:#c4c4c4;">Attributes</div>
<div class="t" style="left:409.30px;top:29.27px;font-size:22px;line-height:22px;color:#c4c4c4;">Display</div>
<div class="r" style="left:7px;top:87px;width:456px;height:36px;background:#2e2e2e;"></div>
<div class="r" style="left:173px;top:91px;width:219px;height:32px;background:#444444;border-radius:2px 2px 0 0;"></div>
<div class="t" style="left:25.80px;top:97.37px;font-size:22px;line-height:22px;color:#a8a8a8;">camera1_aim</div>
<div class="t" style="left:189.70px;top:97.37px;font-size:22px;line-height:22px;color:#e8e8e8;">camera1_aimShape</div>
<div class="t" style="left:412.70px;top:97.37px;font-size:22px;line-height:22px;color:#a8a8a8;">camera1_aimShape</div>
<div class="t" style="left:224.85px;top:192.87px;font-size:22px;line-height:22px;color:#bbbbbb;">locator:</div>
<div class="r" style="left:313px;top:183px;width:173px;height:37px;background:#2e2e2e;border-radius:2px;"></div>
<div class="t" style="left:323.20px;top:192.87px;font-size:22px;line-height:22px;color:#d0d0d0;">camera1_aimShape</div>
<div class="r" style="left:14px;top:295px;width:472px;height:36px;background:#5d5d5d;border-radius:2px;"></div>
<svg class="r" style="left:26px;top:307px;" width="20" height="11" viewBox="0 0 20 11"><path d="M0 0 L20 0 L10.0 11 Z" fill="#e0e0e0"/></svg>
<div class="t" style="left:68.00px;top:304.17px;font-size:22px;line-height:22px;color:#cfcfcf;font-weight:bold;">Locator Attributes</div>
<div class="t" style="left:165.02px;top:346.07px;font-size:22px;line-height:22px;color:#bbbbbb;">Local Position</div>
<div class="r" style="left:318px;top:338px;width:138px;height:37px;background:#2e2e2e;border-radius:2px;"></div>
<div class="t" style="left:327.60px;top:346.07px;font-size:22px;line-height:22px;color:#cccccc;">0.000</div>
<div class="t" style="left:188.26px;top:388.37px;font-size:22px;line-height:22px;color:#bbbbbb;">Local Scale</div>
<div class="r" style="left:318px;top:380px;width:138px;height:37px;background:#2e2e2e;border-radius:2px;"></div>
<div class="t" style="left:327.60px;top:388.37px;font-size:22px;line-height:22px;color:#cccccc;">1.000</div>
<div class="r" style="left:14px;top:422px;width:472px;height:37px;background:#5d5d5d;border-radius:2px;"></div>
<svg class="r" style="left:32px;top:433px;" width="11" height="17" viewBox="0 0 11 17"><path d="M0 0 L11 8.5 L0 17 Z" fill="#e0e0e0"/></svg>
<div class="t" style="left:67.70px;top:431.37px;font-size:22px;line-height:22px;color:#cfcfcf;font-weight:bold;">Object Display</div>
<div class="r" style="left:14px;top:461px;width:472px;height:37px;background:#5d5d5d;border-radius:2px;"></div>
<svg class="r" style="left:32px;top:472px;" width="11" height="17" viewBox="0 0 11 17"><path d="M0 0 L11 8.5 L0 17 Z" fill="#e0e0e0"/></svg>
<div class="t" style="left:67.70px;top:470.37px;font-size:22px;line-height:22px;color:#cfcfcf;font-weight:bold;">Node Behavior</div>
<div class="r" style="left:14px;top:500px;width:472px;height:37px;background:#5d5d5d;border-radius:2px;"></div>
<svg class="r" style="left:32px;top:511px;" width="11" height="17" viewBox="0 0 11 17"><path d="M0 0 L11 8.5 L0 17 Z" fill="#e0e0e0"/></svg>
<div class="t" style="left:67.70px;top:509.37px;font-size:22px;line-height:22px;color:#cfcfcf;font-weight:bold;">UUID</div>
<div class="r" style="left:14px;top:539px;width:472px;height:37px;background:#5d5d5d;border-radius:2px;"></div>
<svg class="r" style="left:32px;top:550px;" width="11" height="17" viewBox="0 0 11 17"><path d="M0 0 L11 8.5 L0 17 Z" fill="#e0e0e0"/></svg>
<div class="t" style="left:67.70px;top:548.37px;font-size:22px;line-height:22px;color:#cfcfcf;font-weight:bold;">Extra Attributes</div>
<svg class="r" style="left:285px;top:787px;" width="178" height="6" viewBox="0 0 178 6"><g fill="#8c8c8c"><rect x="0" y="0" width="2" height="2"/><rect x="6" y="0" width="2" height="2"/><rect x="12" y="0" width="2" height="2"/><rect x="18" y="0" width="2" height="2"/><rect x="24" y="0" width="2" height="2"/><rect x="30" y="0" width="2" height="2"/><rect x="36" y="0" width="2" height="2"/><rect x="42" y="0" width="2" height="2"/><rect x="48" y="0" width="2" height="2"/><rect x="54" y="0" width="2" height="2"/><rect x="60" y="0" width="2" height="2"/><rect x="66" y="0" width="2" height="2"/><rect x="72" y="0" width="2" height="2"/><rect x="78" y="0" width="2" height="2"/><rect x="84" y="0" width="2" height="2"/><rect x="90" y="0" width="2" height="2"/><rect x="96" y="0" width="2" height="2"/><rect x="102" y="0" width="2" height="2"/><rect x="108" y="0" width="2" height="2"/><rect x="114" y="0" width="2" height="2"/><rect x="120" y="0" width="2" height="2"/><rect x="126" y="0" width="2" height="2"/><rect x="132" y="0" width="2" height="2"/><rect x="138" y="0" width="2" height="2"/><rect x="144" y="0" width="2" height="2"/><rect x="150" y="0" width="2" height="2"/><rect x="156" y="0" width="2" height="2"/><rect x="162" y="0" width="2" height="2"/><rect x="168" y="0" width="2" height="2"/><rect x="174" y="0" width="2" height="2"/></g></svg>
<div class="t" style="left:25.00px;top:799.37px;font-size:22px;line-height:22px;color:#cfcfcf;font-weight:bold;">Notes:  camera1_aimShape</div>
<div class="r" style="left:6px;top:824px;width:457px;height:96px;background:#2e2e2e;"></div>
<div class="r" style="left:4px;top:926px;width:275px;height:52px;background:#5d5d5d;border:1px solid #7a7a7a;box-sizing:border-box;border-radius:2px;"></div>
<div class="t" style="left:111.03px;top:943.37px;font-size:22px;line-height:22px;color:#d8d8d8;">Select</div>
<div class="r" style="left:284px;top:926px;width:202px;height:52px;background:#5d5d5d;border:1px solid #7a7a7a;box-sizing:border-box;border-radius:2px;"></div>
<div class="t" style="left:351.80px;top:943.37px;font-size:22px;line-height:22px;color:#d8d8d8;">Load Attributes</div>
</div>
<div class="r" style="left:2577px;top:321px;width:36px;height:984px;background:#2e2e2e;"></div>
<div class="r" style="left:2577px;top:615px;width:33px;height:182px;background:#444444;"></div>
<div class="t" style="left:2577px;top:340px;width:36px;height:256px;"><div style="position:absolute;left:36px;top:0;transform-origin:0 0;transform:rotate(90deg);font-size:22px;line-height:36px;color:#a8a8a8;white-space:nowrap;letter-spacing:-0.3px;">Channel Box / Layer Editor</div></div>
<div class="t" style="left:2577px;top:632px;width:36px;height:150px;"><div style="position:absolute;left:36px;top:0;transform-origin:0 0;transform:rotate(90deg);font-size:22px;line-height:36px;color:#dddddd;white-space:nowrap;letter-spacing:0.15px;">Attribute Editor</div></div>
<div class="t" style="left:2577px;top:817px;width:36px;height:164px;"><div style="position:absolute;left:36px;top:0;transform-origin:0 0;transform:rotate(90deg);font-size:22px;line-height:36px;color:#a8a8a8;white-space:nowrap;letter-spacing:0.35px;">Modeling Toolkit</div></div>
<div class="r" style="left:23px;top:1305px;width:2590px;height:4px;background:#2e2e2e;"></div>
<svg class="r" style="left:28px;top:1313px;" width="8" height="275" viewBox="0 0 8 275"><g fill="#8c8c8c"><rect x="0" y="0" width="2" height="2"/><rect x="6" y="0" width="2" height="2"/><rect x="0" y="6" width="2" height="2"/><rect x="6" y="6" width="2" height="2"/><rect x="0" y="12" width="2" height="2"/><rect x="6" y="12" width="2" height="2"/><rect x="0" y="18" width="2" height="2"/><rect x="6" y="18" width="2" height="2"/><rect x="0" y="24" width="2" height="2"/><rect x="6" y="24" width="2" height="2"/><rect x="0" y="30" width="2" height="2"/><rect x="6" y="30" width="2" height="2"/><rect x="0" y="36" width="2" height="2"/><rect x="6" y="36" width="2" height="2"/><rect x="0" y="42" width="2" height="2"/><rect x="6" y="42" width="2" height="2"/><rect x="0" y="48" width="2" height="2"/><rect x="6" y="48" width="2" height="2"/><rect x="0" y="54" width="2" height="2"/><rect x="6" y="54" width="2" height="2"/><rect x="0" y="60" width="2" height="2"/><rect x="6" y="60" width="2" height="2"/><rect x="0" y="66" width="2" height="2"/><rect x="6" y="66" width="2" height="2"/><rect x="0" y="72" width="2" height="2"/><rect x="6" y="72" width="2" height="2"/><rect x="0" y="78" width="2" height="2"/><rect x="6" y="78" width="2" height="2"/><rect x="0" y="84" width="2" height="2"/><rect x="6" y="84" width="2" height="2"/><rect x="0" y="90" width="2" height="2"/><rect x="6" y="90" width="2" height="2"/><rect x="0" y="96" width="2" height="2"/><rect x="6" y="96" width="2" height="2"/><rect x="0" y="102" width="2" height="2"/><rect x="6" y="102" width="2" height="2"/><rect x="0" y="108" width="2" height="2"/><rect x="6" y="108" width="2" height="2"/><rect x="0" y="114" width="2" height="2"/><rect x="6" y="114" width="2" height="2"/><rect x="0" y="120" width="2" height="2"/><rect x="6" y="120" width="2" height="2"/><rect x="0" y="126" width="2" height="2"/><rect x="6" y="126" width="2" height="2"/><rect x="0" y="132" width="2" height="2"/><rect x="6" y="132" width="2" height="2"/><rect x="0" y="138" width="2" height="2"/><rect x="6" y="138" width="2" height="2"/><rect x="0" y="144" width="2" height="2"/><rect x="6" y="144" width="2" height="2"/><rect x="0" y="150" width="2" height="2"/><rect x="6" y="150" width="2" height="2"/><rect x="0" y="156" width="2" height="2"/><rect x="6" y="156" width="2" height="2"/><rect x="0" y="162" width="2" height="2"/><rect x="6" y="162" width="2" height="2"/><rect x="0" y="168" width="2" height="2"/><rect x="6" y="168" width="2" height="2"/><rect x="0" y="174" width="2" height="2"/><rect x="6" y="174" width="2" height="2"/><rect x="0" y="180" width="2" height="2"/><rect x="6" y="180" width="2" height="2"/><rect x="0" y="186" width="2" height="2"/><rect x="6" y="186" width="2" height="2"/><rect x="0" y="192" width="2" height="2"/><rect x="6" y="192" width="2" height="2"/><rect x="0" y="198" width="2" height="2"/><rect x="6" y="198" width="2" height="2"/><rect x="0" y="204" width="2" height="2"/><rect x="6" y="204" width="2" height="2"/><rect x="0" y="210" width="2" height="2"/><rect x="6" y="210" width="2" height="2"/><rect x="0" y="216" width="2" height="2"/><rect x="6" y="216" width="2" height="2"/><rect x="0" y="222" width="2" height="2"/><rect x="6" y="222" width="2" height="2"/><rect x="0" y="228" width="2" height="2"/><rect x="6" y="228" width="2" height="2"/><rect x="0" y="234" width="2" height="2"/><rect x="6" y="234" width="2" height="2"/><rect x="0" y="240" width="2" height="2"/><rect x="6" y="240" width="2" height="2"/><rect x="0" y="246" width="2" height="2"/><rect x="6" y="246" width="2" height="2"/><rect x="0" y="252" width="2" height="2"/><rect x="6" y="252" width="2" height="2"/><rect x="0" y="258" width="2" height="2"/><rect x="6" y="258" width="2" height="2"/><rect x="0" y="264" width="2" height="2"/><rect x="6" y="264" width="2" height="2"/><rect x="0" y="270" width="2" height="2"/><rect x="6" y="270" width="2" height="2"/></g></svg>
<div class="r" style="left:55px;top:1325px;width:1922px;height:250px;background:#2e2e2e;"></div>
<div class="r" style="left:71px;top:1309px;width:16px;height:16px;background:#5d5d5d;"></div>
<div class="r" style="left:71px;top:1575px;width:16px;height:16px;background:#5d5d5d;"></div>
<div class="r" style="left:55px;top:1576px;width:1906px;height:3px;background:#737373;"></div>
<div class="r" style="left:23px;top:1309px;width:1954px;height:282px;overflow:hidden;">
<div class="r" style="left:32px;top:0px;width:2px;height:16px;background:#111;"></div>
<div class="r" style="left:32px;top:266px;width:2px;height:16px;background:#111;"></div>
<div class="r" style="left:32px;top:157px;width:2px;height:106px;background:#9a9a9a;"></div>
<div class="t" style="left:47.80px;top:21.22px;font-size:21px;line-height:21px;color:#9a9a9a;">0</div>
<div class="r" style="left:111px;top:0px;width:2px;height:16px;background:#111;"></div>
<div class="r" style="left:111px;top:266px;width:2px;height:16px;background:#111;"></div>
<div class="r" style="left:111px;top:157px;width:2px;height:106px;background:#9a9a9a;"></div>
<div class="t" style="left:126.55px;top:21.22px;font-size:21px;line-height:21px;color:#9a9a9a;">5</div>
<div class="r" style="left:189px;top:0px;width:2px;height:16px;background:#111;"></div>
<div class="r" style="left:189px;top:266px;width:2px;height:16px;background:#111;"></div>
<div class="r" style="left:189px;top:157px;width:2px;height:106px;background:#9a9a9a;"></div>
<div class="t" style="left:205.30px;top:21.22px;font-size:21px;line-height:21px;color:#9a9a9a;">10</div>
<div class="r" style="left:268px;top:0px;width:2px;height:16px;background:#111;"></div>
<div class="r" style="left:268px;top:266px;width:2px;height:16px;background:#111;"></div>
<div class="r" style="left:268px;top:157px;width:2px;height:106px;background:#9a9a9a;"></div>
<div class="t" style="left:284.05px;top:21.22px;font-size:21px;line-height:21px;color:#9a9a9a;">15</div>
<div class="r" style="left:347px;top:0px;width:2px;height:16px;background:#111;"></div>
<div class="r" style="left:347px;top:266px;width:2px;height:16px;background:#111;"></div>
<div class="r" style="left:347px;top:157px;width:2px;height:106px;background:#9a9a9a;"></div>
<div class="t" style="left:362.80px;top:21.22px;font-size:21px;line-height:21px;color:#9a9a9a;">20</div>
<div class="r" style="left:426px;top:0px;width:2px;height:16px;background:#111;"></div>
<div class="r" style="left:426px;top:266px;width:2px;height:16px;background:#111;"></div>
<div class="r" style="left:426px;top:157px;width:2px;height:106px;background:#9a9a9a;"></div>
<div class="t" style="left:441.55px;top:21.22px;font-size:21px;line-height:21px;color:#9a9a9a;">25</div>
<div class="r" style="left:504px;top:0px;width:2px;height:16px;background:#111;"></div>
<div class="r" style="left:504px;top:266px;width:2px;height:16px;background:#111;"></div>
<div class="r" style="left:504px;top:157px;width:2px;height:106px;background:#9a9a9a;"></div>
<div class="t" style="left:520.30px;top:21.22px;font-size:21px;line-height:21px;color:#9a9a9a;">30</div>
<div class="r" style="left:583px;top:0px;width:2px;height:16px;background:#111;"></div>
<div class="r" style="left:583px;top:266px;width:2px;height:16px;background:#111;"></div>
<div class="r" style="left:583px;top:157px;width:2px;height:106px;background:#9a9a9a;"></div>
<div class="t" style="left:599.05px;top:21.22px;font-size:21px;line-height:21px;color:#9a9a9a;">35</div>
<div class="r" style="left:662px;top:0px;width:2px;height:16px;background:#111;"></div>
<div class="r" style="left:662px;top:266px;width:2px;height:16px;background:#111;"></div>
<div class="r" style="left:662px;top:157px;width:2px;height:106px;background:#9a9a9a;"></div>
<div class="t" style="left:677.80px;top:21.22px;font-size:21px;line-height:21px;color:#9a9a9a;">40</div>
<div class="r" style="left:741px;top:0px;width:2px;height:16px;background:#111;"></div>
<div class="r" style="left:741px;top:266px;width:2px;height:16px;background:#111;"></div>
<div class="r" style="left:741px;top:157px;width:2px;height:106px;background:#9a9a9a;"></div>
<div class="t" style="left:756.55px;top:21.22px;font-size:21px;line-height:21px;color:#9a9a9a;">45</div>
<div class="r" style="left:819px;top:0px;width:2px;height:16px;background:#111;"></div>
<div class="r" style="left:819px;top:266px;width:2px;height:16px;background:#111;"></div>
<div class="r" style="left:819px;top:157px;width:2px;height:106px;background:#9a9a9a;"></div>
<div class="t" style="left:835.30px;top:21.22px;font-size:21px;line-height:21px;color:#9a9a9a;">50</div>
<div class="r" style="left:898px;top:0px;width:2px;height:16px;background:#111;"></div>
<div class="r" style="left:898px;top:266px;width:2px;height:16px;background:#111;"></div>
<div class="r" style="left:898px;top:157px;width:2px;height:106px;background:#9a9a9a;"></div>
<div class="t" style="left:914.05px;top:21.22px;font-size:21px;line-height:21px;color:#9a9a9a;">55</div>
<div class="r" style="left:977px;top:0px;width:2px;height:16px;background:#111;"></div>
<div class="r" style="left:977px;top:266px;width:2px;height:16px;background:#111;"></div>
<div class="r" style="left:977px;top:157px;width:2px;height:106px;background:#9a9a9a;"></div>
<div class="t" style="left:992.80px;top:21.22px;font-size:21px;line-height:21px;color:#9a9a9a;">60</div>
<div class="r" style="left:1056px;top:0px;width:2px;height:16px;background:#111;"></div>
<div class="r" style="left:1056px;top:266px;width:2px;height:16px;background:#111;"></div>
<div class="r" style="left:1056px;top:157px;width:2px;height:106px;background:#9a9a9a;"></div>
<div class="t" style="left:1071.55px;top:21.22px;font-size:21px;line-height:21px;color:#9a9a9a;">65</div>
<div class="r" style="left:1134px;top:0px;width:2px;height:16px;background:#111;"></div>
<div class="r" style="left:1134px;top:266px;width:2px;height:16px;background:#111;"></div>
<div class="r" style="left:1134px;top:157px;width:2px;height:106px;background:#9a9a9a;"></div>
<div class="t" style="left:1150.30px;top:21.22px;font-size:21px;line-height:21px;color:#9a9a9a;">70</div>
<div class="r" style="left:1213px;top:0px;width:2px;height:16px;background:#111;"></div>
<div class="r" style="left:1213px;top:266px;width:2px;height:16px;background:#111;"></div>
<div class="r" style="left:1213px;top:157px;width:2px;height:106px;background:#9a9a9a;"></div>
<div class="t" style="left:1229.05px;top:21.22px;font-size:21px;line-height:21px;color:#9a9a9a;">75</div>
<div class="r" style="left:1292px;top:0px;width:2px;height:16px;background:#111;"></div>
<div class="r" style="left:1292px;top:266px;width:2px;height:16px;background:#111;"></div>
<div class="r" style="left:1292px;top:157px;width:2px;height:106px;background:#9a9a9a;"></div>
<div class="t" style="left:1307.80px;top:21.22px;font-size:21px;line-height:21px;color:#9a9a9a;">80</div>
<div class="r" style="left:1371px;top:0px;width:2px;height:16px;background:#111;"></div>
<div class="r" style="left:1371px;top:266px;width:2px;height:16px;background:#111;"></div>
<div class="r" style="left:1371px;top:157px;width:2px;height:106px;background:#9a9a9a;"></div>
<div class="t" style="left:1386.55px;top:21.22px;font-size:21px;line-height:21px;color:#9a9a9a;">85</div>
<div class="r" style="left:1449px;top:0px;width:2px;height:16px;background:#111;"></div>
<div class="r" style="left:1449px;top:266px;width:2px;height:16px;background:#111;"></div>
<div class="r" style="left:1449px;top:157px;width:2px;height:106px;background:#9a9a9a;"></div>
<div class="t" style="left:1465.30px;top:21.22px;font-size:21px;line-height:21px;color:#9a9a9a;">90</div>
<div class="r" style="left:1528px;top:0px;width:2px;height:16px;background:#111;"></div>
<div class="r" style="left:1528px;top:266px;width:2px;height:16px;background:#111;"></div>
<div class="r" style="left:1528px;top:157px;width:2px;height:106px;background:#9a9a9a;"></div>
<div class="t" style="left:1544.05px;top:21.22px;font-size:21px;line-height:21px;color:#9a9a9a;">95</div>
<div class="r" style="left:1607px;top:0px;width:2px;height:16px;background:#111;"></div>
<div class="r" style="left:1607px;top:266px;width:2px;height:16px;background:#111;"></div>
<div class="r" style="left:1607px;top:157px;width:2px;height:106px;background:#9a9a9a;"></div>
<div class="t" style="left:1622.80px;top:21.22px;font-size:21px;line-height:21px;color:#9a9a9a;">100</div>
<div class="r" style="left:1686px;top:0px;width:2px;height:16px;background:#111;"></div>
<div class="r" style="left:1686px;top:266px;width:2px;height:16px;background:#111;"></div>
<div class="r" style="left:1686px;top:157px;width:2px;height:106px;background:#9a9a9a;"></div>
<div class="t" style="left:1701.55px;top:21.22px;font-size:21px;line-height:21px;color:#9a9a9a;">105</div>
<div class="r" style="left:1764px;top:0px;width:2px;height:16px;background:#111;"></div>
<div class="r" style="left:1764px;top:266px;width:2px;height:16px;background:#111;"></div>
<div class="r" style="left:1764px;top:157px;width:2px;height:106px;background:#9a9a9a;"></div>
<div class="t" style="left:1780.30px;top:21.22px;font-size:21px;line-height:21px;color:#9a9a9a;">110</div>
<div class="r" style="left:1843px;top:0px;width:2px;height:16px;background:#111;"></div>
<div class="r" style="left:1843px;top:266px;width:2px;height:16px;background:#111;"></div>
<div class="r" style="left:1843px;top:157px;width:2px;height:106px;background:#9a9a9a;"></div>
<div class="t" style="left:1859.05px;top:21.22px;font-size:21px;line-height:21px;color:#9a9a9a;">115</div>
<div class="r" style="left:1922px;top:0px;width:2px;height:16px;background:#111;"></div>
<div class="r" style="left:1922px;top:266px;width:2px;height:16px;background:#111;"></div>
<div class="r" style="left:1922px;top:157px;width:2px;height:106px;background:#9a9a9a;"></div>
<div class="t" style="left:1937.80px;top:21.22px;font-size:21px;line-height:21px;color:#9a9a9a;">120</div>
<div class="t" style="left:64.40px;top:237.72px;font-size:21px;line-height:21px;color:#f0f0f0;">1</div>
</div>
<div class="r" style="left:1994px;top:1429px;width:101px;height:42px;background:#2e2e2e;border-radius:2px;"></div>
<div class="t" style="left:2005.00px;top:1440.22px;font-size:21px;line-height:21px;color:#e0e0e0;">1</div>
<svg class="r" style="left:2171px;top:1435px;" width="29" height="29" viewBox="0 0 29 29"><rect x="1" y="1" width="5" height="27" fill="#bdbdbd" stroke="#2b2b2b" stroke-width="1.4" stroke-linejoin="round"/><path d="M6 14.5 L17 4 V25 Z M17 14.5 L28 4 V25 Z" fill="#bdbdbd" stroke="#2b2b2b" stroke-width="1.4" stroke-linejoin="round"/></svg>
<svg class="r" style="left:2229px;top:1435px;" width="24" height="29" viewBox="0 0 24 29"><rect x="1" y="1" width="5" height="27" fill="#bdbdbd" stroke="#2b2b2b" stroke-width="1.4" stroke-linejoin="round"/><path d="M6 14.5 L23 4 V25 Z" fill="#bdbdbd" stroke="#2b2b2b" stroke-width="1.4" stroke-linejoin="round"/></svg>
<svg class="r" style="left:2284px;top:1433px;" width="25" height="34" viewBox="0 0 25 34"><path d="M1 3 V31" stroke="#999" stroke-width="1.2" stroke-dasharray="2 2"/><rect x="0" y="6" width="5" height="22" fill="#de9455" stroke="#2b2b2b" stroke-width="1.2" stroke-linejoin="round"/><path d="M7 17 L24 6 V28 Z" fill="#bdbdbd" stroke="#2b2b2b" stroke-width="1.4" stroke-linejoin="round"/></svg>
<svg class="r" style="left:2342px;top:1434px;" width="26" height="32" viewBox="0 0 26 32"><path d="M1 16 L25 1 V31 Z" fill="#bdbdbd" stroke="#2b2b2b" stroke-width="1.4" stroke-linejoin="round"/></svg>
<svg class="r" style="left:2396px;top:1434px;" width="26" height="32" viewBox="0 0 26 32"><path d="M25 16 L1 1 V31 Z" fill="#bdbdbd" stroke="#2b2b2b" stroke-width="1.4" stroke-linejoin="round"/></svg>
<svg class="r" style="left:2452px;top:1433px;" width="25" height="34" viewBox="0 0 25 34"><path d="M24 3 V31" stroke="#999" stroke-width="1.2" stroke-dasharray="2 2"/><path d="M1 6 V28 L18 17 Z" fill="#bdbdbd" stroke="#2b2b2b" stroke-width="1.4" stroke-linejoin="round"/><rect x="19" y="6" width="5" height="22" fill="#de9455" stroke="#2b2b2b" stroke-width="1.2" stroke-linejoin="round"/></svg>
<svg class="r" style="left:2508px;top:1435px;" width="25" height="29" viewBox="0 0 25 29"><path d="M1 4 V25 L18 14.5 Z" fill="#bdbdbd" stroke="#2b2b2b" stroke-width="1.4" stroke-linejoin="round"/><rect x="19" y="1" width="5" height="27" fill="#bdbdbd" stroke="#2b2b2b" stroke-width="1.4" stroke-linejoin="round"/></svg>
<svg class="r" style="left:2562px;top:1435px;" width="29" height="29" viewBox="0 0 29 29"><path d="M1 4 V25 L12 14.5 Z M12 4 V25 L23 14.5 Z" fill="#bdbdbd" stroke="#2b2b2b" stroke-width="1.4" stroke-linejoin="round"/><rect x="23" y="1" width="5" height="27" fill="#bdbdbd" stroke="#2b2b2b" stroke-width="1.4" stroke-linejoin="round"/></svg>
<div class="r" style="left:23px;top:1591px;width:2590px;height:4px;background:#2e2e2e;"></div>
<svg class="r" style="left:28px;top:1600px;" width="8" height="64" viewBox="0 0 8 64"><g fill="#8c8c8c"><rect x="0" y="0" width="2" height="2"/><rect x="6" y="0" width="2" height="2"/><rect x="0" y="6" width="2" height="2"/><rect x="6" y="6" width="2" height="2"/><rect x="0" y="12" width="2" height="2"/><rect x="6" y="12" width="2" height="2"/><rect x="0" y="18" width="2" height="2"/><rect x="6" y="18" width="2" height="2"/><rect x="0" y="24" width="2" height="2"/><rect x="6" y="24" width="2" height="2"/><rect x="0" y="30" width="2" height="2"/><rect x="6" y="30" width="2" height="2"/><rect x="0" y="36" width="2" height="2"/><rect x="6" y="36" width="2" height="2"/><rect x="0" y="42" width="2" height="2"/><rect x="6" y="42" width="2" height="2"/><rect x="0" y="48" width="2" height="2"/><rect x="6" y="48" width="2" height="2"/><rect x="0" y="54" width="2" height="2"/><rect x="6" y="54" width="2" height="2"/><rect x="0" y="60" width="2" height="2"/><rect x="6" y="60" width="2" height="2"/></g></svg>
<div class="r" style="left:56px;top:1610px;width:101px;height:42px;background:#2e2e2e;border-radius:2px;"></div>
<div class="t" style="left:66.90px;top:1622.22px;font-size:21px;line-height:21px;color:#d0d0d0;">1</div>
<div class="r" style="left:172px;top:1609px;width:929px;height:44px;background:#2e2e2e;border-radius:3px;"></div>
<div class="r" style="left:176px;top:1613px;width:578px;height:36px;background:#444444;"></div>
<div class="r" style="left:176px;top:1613px;width:18px;height:36px;background:#999999;border-radius:2px;"></div>
<div class="r" style="left:736px;top:1613px;width:18px;height:36px;background:#999999;border-radius:2px;"></div>
<div class="t" style="left:211.70px;top:1622.22px;font-size:21px;line-height:21px;color:#d0d0d0;">1</div>
<div class="t" style="left:683.96px;top:1622.22px;font-size:21px;line-height:21px;color:#d0d0d0;">120</div>
<svg class="r" style="left:461px;top:1618px;" width="8" height="26" viewBox="0 0 8 26"><g fill="#8c8c8c"><rect x="0" y="0" width="2" height="2"/><rect x="6" y="0" width="2" height="2"/><rect x="0" y="6" width="2" height="2"/><rect x="6" y="6" width="2" height="2"/><rect x="0" y="12" width="2" height="2"/><rect x="6" y="12" width="2" height="2"/><rect x="0" y="18" width="2" height="2"/><rect x="6" y="18" width="2" height="2"/><rect x="0" y="24" width="2" height="2"/><rect x="6" y="24" width="2" height="2"/></g></svg>
<div class="r" style="left:1117px;top:1610px;width:101px;height:42px;background:#2e2e2e;border-radius:2px;"></div>
<div class="t" style="left:1126.40px;top:1622.22px;font-size:21px;line-height:21px;color:#d0d0d0;">200</div>
<div class="r" style="left:1259px;top:1611px;width:2px;height:40px;background:#8a8a8a;"></div>
<div class="r" style="left:1257px;top:1621.0px;width:6px;height:20.0px;background:#8a8a8a;"></div>
<svg class="r" style="left:1314px;top:1612px;" width="30" height="38" viewBox="0 0 30 38"><path d="M2 4 L20 4 L20 36 L11 27 L2 36 Z" fill="#e07040" stroke="#2b2b2b" stroke-width="1.5"/><path d="M22 2 V16 M15 9 H29" stroke="#e0e0e0" stroke-width="3"/></svg>
<div class="r" style="left:1387px;top:1611px;width:2px;height:40px;background:#8a8a8a;"></div>
<div class="r" style="left:1385px;top:1621.0px;width:6px;height:20.0px;background:#8a8a8a;"></div>
<svg class="r" style="left:1439px;top:1624px;" width="22" height="12" viewBox="0 0 22 12"><path d="M0 0 L22 0 L11.0 12 Z" fill="#777"/></svg>
<div class="r" style="left:1471px;top:1611px;width:202px;height:38px;border:1px solid #5a5a5a;border-radius:3px;"></div>
<div class="t" style="left:1481.60px;top:1621.37px;font-size:22px;line-height:22px;color:#c8c8c8;">No Character Set</div>
<svg class="r" style="left:1700px;top:1624px;" width="22" height="12" viewBox="0 0 22 12"><path d="M0 0 L22 0 L11.0 12 Z" fill="#777"/></svg>
<div class="r" style="left:1733px;top:1611px;width:202px;height:38px;border:1px solid #5a5a5a;border-radius:3px;"></div>
<div class="t" style="left:1743.90px;top:1621.37px;font-size:22px;line-height:22px;color:#c8c8c8;">No Anim Layer</div>
<div class="r" style="left:1979px;top:1611px;width:2px;height:40px;background:#8a8a8a;"></div>
<div class="r" style="left:1977px;top:1621.0px;width:6px;height:20.0px;background:#8a8a8a;"></div>
<div class="r" style="left:2024px;top:1613px;width:158px;height:35px;background:#5d5d5d;border-radius:2px;"></div>
<div class="t" style="left:2031.30px;top:1621.37px;font-size:22px;line-height:22px;color:#c8c8c8;">24 fps</div>
<svg class="r" style="left:2155px;top:1626px;" width="18" height="10" viewBox="0 0 18 10"><path d="M0 0 L18 0 L9.0 10 Z" fill="#bbbbbb"/></svg>
<div class="r" style="left:2399px;top:1611px;width:2px;height:40px;background:#8a8a8a;"></div>
<div class="r" style="left:2397px;top:1621.0px;width:6px;height:20.0px;background:#8a8a8a;"></div>
<svg class="r" style="left:2205px;top:1612px;" width="36" height="37" viewBox="0 0 36 37"><path d="M6 18 A9 9 0 0 1 10 6 H28 M28 18 A9 9 0 0 1 24 30 H6" fill="none" stroke="#2b2b2b" stroke-width="6"/><path d="M6 18 A9 9 0 0 1 10 6 H28 M28 18 A9 9 0 0 1 24 30 H6" fill="none" stroke="#bdbdbd" stroke-width="3"/><path d="M25 1 L32 6 L25 11 Z M9 25 L2 30 L9 35 Z" fill="#bdbdbd" stroke="#2b2b2b" stroke-width="1" stroke-linejoin="round"/></svg>
<svg class="r" style="left:2261px;top:1610px;" width="42" height="42" viewBox="0 0 42 42"><rect x="0" y="0" width="42" height="42" fill="#5285a6"/><rect x="5" y="9" width="30" height="27" fill="#de9455" stroke="#2b2b2b" stroke-width="1.6" stroke-linejoin="round"/><rect x="9" y="15" width="22" height="15" fill="#2b2b2b"/><rect x="12" y="19" width="5" height="9" fill="#bdbdbd"/><rect x="19" y="17" width="5" height="11" fill="#bdbdbd"/><rect x="26" y="21" width="4" height="7" fill="#bdbdbd"/><path d="M28 3 L40 11 L28 19 Z" fill="#bdbdbd" stroke="#2b2b2b" stroke-width="1.4" stroke-linejoin="round"/></svg>
<svg class="r" style="left:2317px;top:1610px;" width="42" height="42" viewBox="0 0 42 42"><path d="M6 1 H1 V41 H6 M36 1 H41 V41 H36" fill="none" stroke="#22dd22" stroke-width="2"/><rect x="5" y="16" width="18" height="12" fill="#e07040"/><rect x="27" y="16" width="9" height="12" fill="#bdbdbd"/><path d="M18 6 H30 L25 13 V38" fill="none" stroke="#bdbdbd" stroke-width="2.6"/></svg>
<svg class="r" style="left:2446px;top:1614px;" width="38" height="36" viewBox="0 0 38 36"><path d="M1 12 H9 L20 3 V33 L9 24 H1 Z" fill="#bdbdbd" stroke="#2b2b2b" stroke-width="1.4" stroke-linejoin="round"/><path d="M25 13 A6 6 0 0 1 25 23 M29 9 A11 11 0 0 1 29 27 M33 5 A16 16 0 0 1 33 31" fill="none" stroke="#bdbdbd" stroke-width="2.4"/></svg>
<svg class="r" style="left:2503px;top:1614px;" width="36" height="36" viewBox="0 0 36 36"><path d="M5 14 A13 13 0 0 1 29 10 M30 22 A13 13 0 0 1 6 26" fill="none" stroke="#bdbdbd" stroke-width="2.6"/><path d="M27 3 L33 12 L23 13 Z M8 33 L2 24 L12 23 Z" fill="#bdbdbd"/><rect x="15" y="10" width="5" height="16" fill="#de9455" stroke="#2b2b2b" stroke-width="1" stroke-linejoin="round"/><path d="M9 18 H13 M22 18 H26" stroke="#bdbdbd" stroke-width="2"/></svg>
<svg class="r" style="left:2558px;top:1608px;" width="40" height="42" viewBox="0 0 40 42"><circle cx="9" cy="9" r="6.800000000000001" fill="#bdbdbd" stroke="#2b2b2b" stroke-width="1.2" stroke-linejoin="round"/><path d="M0.5 9 H17.5 M9 0.5 V17.5 M3.0500000000000007 3.0500000000000007 L14.95 14.95 M3.0500000000000007 14.95 L14.95 3.0500000000000007" stroke="#bdbdbd" stroke-width="3.8"/><circle cx="9" cy="9" r="4.675000000000001" fill="#bdbdbd"/><circle cx="9" cy="9" r="2.3800000000000003" fill="#444444"/><circle cx="31" cy="12" r="3.5" fill="#de9455"/><path d="M14 37 L20 28 L26 32 L29 22 L20 22 L16 28 M29 22 L34 30 L38 28 M25 31 L27 39 L33 39" fill="none" stroke="#2b2b2b" stroke-width="6" stroke-linejoin="round"/><path d="M14 37 L20 28 L26 32 L29 22 L20 22 L16 28 M29 22 L34 30 L38 28 M25 31 L27 39 L33 39" fill="none" stroke="#de9455" stroke-width="3.2" stroke-linejoin="round"/></svg>
<div class="r" style="left:23px;top:1667px;width:2590px;height:4px;background:#2e2e2e;"></div>
<svg class="r" style="left:28px;top:1676px;" width="8" height="64" viewBox="0 0 8 64"><g fill="#8c8c8c"><rect x="0" y="0" width="2" height="2"/><rect x="6" y="0" width="2" height="2"/><rect x="0" y="6" width="2" height="2"/><rect x="6" y="6" width="2" height="2"/><rect x="0" y="12" width="2" height="2"/><rect x="6" y="12" width="2" height="2"/><rect x="0" y="18" width="2" height="2"/><rect x="6" y="18" width="2" height="2"/><rect x="0" y="24" width="2" height="2"/><rect x="6" y="24" width="2" height="2"/><rect x="0" y="30" width="2" height="2"/><rect x="6" y="30" width="2" height="2"/><rect x="0" y="36" width="2" height="2"/><rect x="6" y="36" width="2" height="2"/><rect x="0" y="42" width="2" height="2"/><rect x="6" y="42" width="2" height="2"/><rect x="0" y="48" width="2" height="2"/><rect x="6" y="48" width="2" height="2"/><rect x="0" y="54" width="2" height="2"/><rect x="6" y="54" width="2" height="2"/><rect x="0" y="60" width="2" height="2"/><rect x="6" y="60" width="2" height="2"/></g></svg>
<svg class="r" style="left:55px;top:1691px;" width="32" height="32" viewBox="0 0 32 32"><circle cx="16" cy="16" r="16" fill="#86b03c"/><path d="M10.5 12 A5.5 5.5 0 1 1 17.5 17 L16.5 18 L16.5 21" fill="none" stroke="#3a3a3a" stroke-width="3.6"/><rect x="14.6" y="23.5" width="3.8" height="3.6" fill="#3a3a3a"/></svg>
<div class="t" style="left:103.00px;top:1698.07px;font-size:20px;line-height:20px;color:#d8d8d8;letter-spacing:-0.209px;">Select Tool: select an object</div>
<div class="r" style="left:1120px;top:1671px;width:3px;height:72px;background:#2e2e2e;"></div>
<svg class="r" style="left:1127px;top:1677px;" width="8" height="63" viewBox="0 0 8 63"><g fill="#8c8c8c"><rect x="0" y="0" width="2" height="2"/><rect x="6" y="0" width="2" height="2"/><rect x="0" y="6" width="2" height="2"/><rect x="6" y="6" width="2" height="2"/><rect x="0" y="12" width="2" height="2"/><rect x="6" y="12" width="2" height="2"/><rect x="0" y="18" width="2" height="2"/><rect x="6" y="18" width="2" height="2"/><rect x="0" y="24" width="2" height="2"/><rect x="6" y="24" width="2" height="2"/><rect x="0" y="30" width="2" height="2"/><rect x="6" y="30" width="2" height="2"/><rect x="0" y="36" width="2" height="2"/><rect x="6" y="36" width="2" height="2"/><rect x="0" y="42" width="2" height="2"/><rect x="6" y="42" width="2" height="2"/><rect x="0" y="48" width="2" height="2"/><rect x="6" y="48" width="2" height="2"/><rect x="0" y="54" width="2" height="2"/><rect x="6" y="54" width="2" height="2"/><rect x="0" y="60" width="2" height="2"/><rect x="6" y="60" width="2" height="2"/></g></svg>
<div class="t" style="left:1159.00px;top:1696.17px;font-size:22px;line-height:22px;color:#e0e0e0;">MEL</div>
<div class="r" style="left:1214px;top:1687px;width:659px;height:39px;background:#2e2e2e;border-radius:2px;"></div>
<svg class="r" style="left:1876px;top:1693px;" width="3" height="30" viewBox="0 0 3 30"><g fill="#8c8c8c"><rect x="0" y="0" width="2" height="2"/><rect x="0" y="6" width="2" height="2"/><rect x="0" y="12" width="2" height="2"/><rect x="0" y="18" width="2" height="2"/><rect x="0" y="24" width="2" height="2"/></g></svg>
<div class="r" style="left:1881px;top:1687px;width:659px;height:39px;background:#2e2e2e;border-radius:2px;"></div>
<div class="t" style="left:1889.60px;top:1696.17px;font-size:22px;line-height:22px;color:#d0d0d0;">// Result: camera1</div>
<svg class="r" style="left:2558px;top:1688px;" width="38" height="37" viewBox="0 0 38 37"><rect x="0" y="0" width="38" height="37" fill="#bdbdbd"/><rect x="0" y="4" width="38" height="2" fill="#2b2b2b"/><g fill="#2b2b2b"><rect x="4" y="1" width="2" height="2"/><rect x="8" y="1" width="2" height="2"/><rect x="12" y="1" width="2" height="2"/></g><text x="19" y="30" font-size="20" font-weight="bold" fill="#2b2b2b" text-anchor="middle" font-family="Liberation Mono">{;}</text></svg>
</body></html>
